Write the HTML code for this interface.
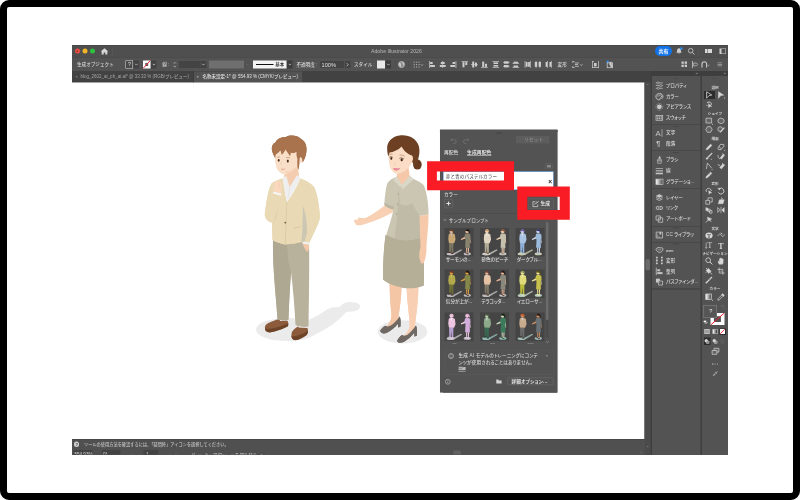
<!DOCTYPE html>
<html lang="ja">
<head>
<meta charset="utf-8">
<title>Adobe Illustrator 2026</title>
<style>
*{box-sizing:border-box;margin:0;padding:0}
html,body{width:800px;height:500px;overflow:hidden;background:#fff}
body{font-family:"Liberation Sans","Noto Sans CJK JP",sans-serif;color:#dcdcdc;position:relative}
.a{position:absolute}
.t{position:absolute;white-space:nowrap;line-height:1;color:#d6d6d6;font-size:4.6px;font-weight:500}
svg{position:absolute;overflow:visible}
#frame{left:0;top:0;width:800px;height:500px;border:7px solid #000;border-radius:9px;background:#fff}
#win{left:72px;top:45px;width:656px;height:410px;background:#535353}
#title{left:72px;top:45px;width:656px;height:12.3px;background:#4f4f4f;border-top:.6px solid #444}
#ctrl{left:72px;top:57.3px;width:656px;height:13.7px;background:#535353;border-top:.6px solid #474747}
#tabs{left:72px;top:71px;width:656px;height:11.5px;background:#424242}
#tab2{left:194px;top:71.4px;width:108px;height:11.1px;background:#535353}
#canvas{left:72px;top:82.5px;width:572.5px;height:356.6px;background:#fff}
#vscroll{left:644.5px;top:82.5px;width:6.1px;height:372.5px;background:#4b4b4b}
#dock1{left:652px;top:76px;width:48.6px;height:379px;background:#535353}
#dock2{left:702px;top:76px;width:26px;height:379px;background:#535353}
#docksep{left:650.6px;top:71px;width:77.4px;height:384px;background:#3e3e3e}
@supports not (zoom:2){#root{transform:none!important}}
#status{left:72px;top:439px;width:572.5px;height:16px;background:#505050}
</style>
</head>
<body>
<div id="root" class="a" style="left:0;top:0;width:800px;height:500px;zoom:2;transform:scale(.5);transform-origin:0 0;filter:contrast(1)">
<div id="frame" class="a"></div>
<div id="win" class="a"></div>
<div id="title" class="a"></div>
<div id="ctrl" class="a"></div>
<div id="tabs" class="a"></div>
<div id="tab2" class="a"></div>
<div id="canvas" class="a"></div>
<div id="vscroll" class="a"></div>
<div id="docksep" class="a"></div>
<div id="dock1" class="a"></div>
<div id="dock2" class="a"></div>
<div id="status" class="a"></div>
<!--TITLEBAR-->
<div class="a" style="left:74.8px;top:48.7px;width:5px;height:5px;border-radius:50%;background:#ee4f47"></div>
<div class="a" style="left:76.6px;top:50.5px;width:1.4px;height:1.4px;border-radius:50%;background:#8c1a14"></div>
<div class="a" style="left:82.3px;top:48.7px;width:5px;height:5px;border-radius:50%;background:#f6b526"></div>
<div class="a" style="left:90px;top:48.7px;width:5px;height:5px;border-radius:50%;background:#2cc13e"></div>
<svg style="left:100.5px;top:48px" width="8" height="7" viewBox="0 0 8 7"><path d="M4 0.2 L7.8 3.6 H6.8 V6.6 H4.8 V4.4 H3.2 V6.6 H1.2 V3.6 H0.2 Z" fill="#d8d8d8"/></svg>
<div class="a" style="left:112.3px;top:47px;width:.5px;height:8.5px;background:#5c5c5c"></div>
<div class="t" style="left:371px;top:48.5px;font-size:5.2px;color:#b8b8b8">Adobe Illustrator 2026</div>
<div class="a" style="left:654.8px;top:46.2px;width:17.2px;height:9.6px;border-radius:5px;background:#1373e6"></div>
<div class="t" style="left:658.4px;top:48.4px;font-size:5px;color:#fff;font-weight:bold">共有</div>
<svg style="left:675.5px;top:47px" width="8" height="8" viewBox="0 0 8 8"><path d="M3.5 1.2 C4.8 1.2 5.4 2.2 5.4 3.4 C5.4 4.6 5.8 5.2 6.4 5.8 H0.6 C1.2 5.2 1.6 4.6 1.6 3.4 C1.6 2.2 2.2 1.2 3.5 1.2 Z M2.8 6.3 H4.2 C4.2 7 2.8 7 2.8 6.3Z" fill="#cfcfcf"/><circle cx="5.9" cy="1.5" r="1.3" fill="#2b8cf0"/></svg>
<svg style="left:687.5px;top:47.4px" width="8" height="8" viewBox="0 0 8 8"><circle cx="3.2" cy="3.2" r="2.3" fill="none" stroke="#cfcfcf" stroke-width=".8"/><path d="M4.9 4.9 L7 7" stroke="#cfcfcf" stroke-width=".9"/></svg>
<div class="a" style="left:698.5px;top:47px;width:.5px;height:8.5px;background:#5c5c5c"></div>
<div class="a" style="left:705.2px;top:49.2px;width:2.3px;height:4px;background:#d8d8d8"></div>
<div class="a" style="left:708.2px;top:49.2px;width:3.8px;height:4px;background:#d8d8d8"></div>
<div class="a" style="left:719.4px;top:48.6px;width:6.6px;height:5.4px;border:.7px solid #d0d0d0;border-left:2px solid #d0d0d0"></div>
<!--CTRLBAR-->
<div class="t" style="left:77px;top:62.1px;font-size:4.6px;color:#d2d2d2;">生成オブジェクト</div>
<div class="a" style="left:125.5px;top:60.5px;width:7.6px;height:8px;background:#4a4a4a;border:.9px solid #dedede"></div>
<div class="t" style="left:127.9px;top:61.9px;font-size:5.2px;color:#e6e6e6;">?</div>
<div class="a" style="left:133.6px;top:60.5px;width:5.6px;height:8px;background:#434343;"></div>
<svg style="left:135.0px;top:63.7px" width="2.8" height="2" viewBox="0 0 2.8 2"><path d="M0.1 0.3 L1.4 1.6 L2.6999999999999997 0.3" fill="none" stroke="#cfcfcf" stroke-width=".7"/></svg>
<div class="a" style="left:143px;top:60.5px;width:7.4px;height:8px;background:#fff;"></div>
<svg style="left:143px;top:60.5px" width="7.4" height="8" viewBox="0 0 7.4 8"><rect x="2.2" y="2.4" width="3" height="3.2" fill="#666"/><path d="M0.3 7.7 L7.1 0.3" stroke="#e8202a" stroke-width="1"/></svg>
<div class="a" style="left:150.9px;top:60.5px;width:5.6px;height:8px;background:#434343;"></div>
<svg style="left:152.29999999999998px;top:63.7px" width="2.8" height="2" viewBox="0 0 2.8 2"><path d="M0.1 0.3 L1.4 1.6 L2.6999999999999997 0.3" fill="none" stroke="#cfcfcf" stroke-width=".7"/></svg>
<div class="t" style="left:162.3px;top:62.2px;font-size:4.6px;color:#d2d2d2;">線</div>
<div class="t" style="left:167.8px;top:62.0px;font-size:4.6px;color:#d2d2d2;">:</div>
<svg style="left:173.29999999999998px;top:61.8px" width="2.6" height="2" viewBox="0 0 2.6 2"><path d="M0.1 1.6 L1.3 0.3 L2.5 1.6" fill="none" stroke="#c8c8c8" stroke-width=".7"/></svg>
<svg style="left:173.3px;top:65.6px" width="2.6" height="2" viewBox="0 0 2.6 2"><path d="M0.1 0.3 L1.3 1.6 L2.5 0.3" fill="none" stroke="#c8c8c8" stroke-width=".7"/></svg>
<div class="a" style="left:179px;top:61px;width:21px;height:7.2px;background:#444;"></div>
<div class="a" style="left:200.6px;top:61px;width:5.8px;height:7.2px;background:#434343;"></div>
<svg style="left:202.1px;top:63.7px" width="2.8" height="2" viewBox="0 0 2.8 2"><path d="M0.1 0.3 L1.4 1.6 L2.6999999999999997 0.3" fill="none" stroke="#cfcfcf" stroke-width=".7"/></svg>
<div class="a" style="left:209px;top:60.5px;width:35px;height:8px;background:#6f6f6f;"></div>
<svg style="left:246.1px;top:63.7px" width="2.8" height="2" viewBox="0 0 2.8 2"><path d="M0.1 0.3 L1.4 1.6 L2.6999999999999997 0.3" fill="none" stroke="#6a6a6a" stroke-width=".7"/></svg>
<div class="a" style="left:253px;top:60.5px;width:33.6px;height:8px;background:#f4f4f4;"></div>
<div class="a" style="left:256px;top:64px;width:17.5px;height:1px;background:#111;"></div>
<div class="t" style="left:275.2px;top:62.2px;font-size:4.5px;color:#111;">基本</div>
<div class="a" style="left:287.1px;top:60.5px;width:5.4px;height:8px;background:#3d3d3d;"></div>
<svg style="left:288.40000000000003px;top:63.7px" width="2.8" height="2" viewBox="0 0 2.8 2"><path d="M0.1 0.3 L1.4 1.6 L2.6999999999999997 0.3" fill="none" stroke="#cfcfcf" stroke-width=".7"/></svg>
<div class="t" style="left:296.4px;top:62.0px;font-size:4.6px;color:#dcdcdc;border-bottom:.5px dotted #bbb;padding-bottom:.6px">不透明度</div>
<div class="t" style="left:315.7px;top:62.0px;font-size:4.6px;color:#d2d2d2;">:</div>
<div class="a" style="left:320px;top:61px;width:24.2px;height:7.2px;background:#444;"></div>
<div class="t" style="left:321.6px;top:61.8px;font-size:5.6px;color:#e0e0e0;">100%</div>
<div class="a" style="left:344.8px;top:61px;width:5.6px;height:7.2px;background:#434343;"></div>
<svg style="left:346.6px;top:62.9px" width="2" height="3.4" viewBox="0 0 2 3.4"><path d="M0.3 0.2 L1.7 1.7 L0.3 3.2" fill="none" stroke="#d8d8d8" stroke-width=".7"/></svg>
<div class="t" style="left:354px;top:62.1px;font-size:4.6px;color:#d2d2d2;">スタイル</div>
<div class="t" style="left:373.2px;top:62.0px;font-size:4.6px;color:#9a9a9a;">:</div>
<div class="a" style="left:376.9px;top:60.6px;width:8.1px;height:8px;background:#e9e9e9;"></div>
<div class="a" style="left:385.6px;top:60.6px;width:5.5px;height:8px;background:#3d3d3d;"></div>
<svg style="left:387.0px;top:63.7px" width="2.8" height="2" viewBox="0 0 2.8 2"><path d="M0.1 0.3 L1.4 1.6 L2.6999999999999997 0.3" fill="none" stroke="#cfcfcf" stroke-width=".7"/></svg>
<div class="a" style="left:395.5px;top:60.5px;width:0.5px;height:8px;background:#484848;"></div>
<svg style="left:398px;top:61px" width="7" height="7" viewBox="0 0 7 7"><circle cx="3.5" cy="3.5" r="3" fill="#8a8a8a" stroke="#d0d0d0" stroke-width=".7"/><path d="M1.2 2.2 C2.4 1.6 3.2 2.6 2.8 3.6 C2.5 4.4 3.4 4.8 3.2 5.8 C2 5.6 .8 4 1.2 2.2Z M4.4 1 C5.6 1.6 6.2 2.8 6 4 C5.2 3.8 4.4 3 4.4 1Z" fill="#d8d8d8"/></svg>
<div class="a" style="left:408.3px;top:60.5px;width:0.5px;height:8px;background:#484848;"></div>
<svg style="left:413.6px;top:61.3px" width="7" height="7" viewBox="0 0 7 7"><rect x="0.2" y="0.2" width="1" height="1" fill="#bdbdbd"/><rect x="0.2" y="2.6" width="1" height="1" fill="#bdbdbd"/><rect x="0.2" y="5.0" width="1" height="1" fill="#bdbdbd"/><rect x="2.6" y="0.2" width="1" height="1" fill="#bdbdbd"/><rect x="2.6" y="2.6" width="1" height="1" fill="#bdbdbd"/><rect x="2.6" y="5.0" width="1" height="1" fill="#bdbdbd"/><rect x="5.0" y="0.2" width="1" height="1" fill="#bdbdbd"/><rect x="5.0" y="2.6" width="1" height="1" fill="#bdbdbd"/><rect x="5.0" y="5.0" width="1" height="1" fill="#bdbdbd"/></svg>
<svg style="left:420.7px;top:64px" width="2.6" height="2" viewBox="0 0 2.6 2"><path d="M0.1 0.3 L1.3 1.6 L2.5 0.3" fill="none" stroke="#bdbdbd" stroke-width=".7"/></svg>
<svg style="left:429px;top:61px" width="7" height="7" viewBox="0 0 7 7"><rect x="0" y="0" width="0.7" height="7" fill="#cccccc"/><rect x="1.1" y="1" width="2.6" height="2" fill="#cccccc"/><rect x="1.1" y="4" width="4.8" height="2" fill="#cccccc"/></svg>
<svg style="left:439.3px;top:61px" width="7" height="7" viewBox="0 0 7 7"><rect x="2.9" y="0" width="0.7" height="7" fill="#cccccc"/><rect x="1.3" y="1" width="3.9" height="2" fill="#cccccc"/><rect x="0.3" y="4" width="5.9" height="2" fill="#cccccc"/></svg>
<svg style="left:450px;top:61px" width="7" height="7" viewBox="0 0 7 7"><rect x="5.6" y="0" width="0.7" height="7" fill="#cccccc"/><rect x="2.5" y="1" width="2.7" height="2" fill="#cccccc"/><rect x="0.3" y="4" width="4.9" height="2" fill="#cccccc"/></svg>
<svg style="left:461.3px;top:61px" width="7" height="7" viewBox="0 0 7 7"><rect x="0" y="0" width="6.6" height="0.7" fill="#cccccc"/><rect x="1" y="1.1" width="2" height="5.2" fill="#cccccc"/><rect x="3.8" y="1.1" width="2" height="3" fill="#cccccc"/></svg>
<svg style="left:471px;top:61px" width="7" height="7" viewBox="0 0 7 7"><rect x="0" y="3.2" width="6.8" height="0.7" fill="#cccccc"/><rect x="1.2" y="0.6" width="2" height="5.9" fill="#cccccc"/><rect x="4" y="1.6" width="2" height="3.9" fill="#cccccc"/></svg>
<svg style="left:481px;top:61px" width="7" height="7" viewBox="0 0 7 7"><rect x="0" y="6.3" width="6.8" height="0.7" fill="#cccccc"/><rect x="1.2" y="0.6" width="2" height="5.3" fill="#cccccc"/><rect x="4" y="2.8" width="2" height="3.1" fill="#cccccc"/></svg>
<svg style="left:492.6px;top:61px" width="7" height="7" viewBox="0 0 7 7"><rect x="0" y="0.2" width="6.6" height="0.7" fill="#cccccc"/><rect x="1" y="1.4" width="4.6" height="1.6" fill="#cccccc"/><rect x="0" y="6.1" width="6.6" height="0.7" fill="#cccccc"/><rect x="1" y="4" width="4.6" height="1.6" fill="#cccccc"/></svg>
<svg style="left:503px;top:61px" width="7" height="7" viewBox="0 0 7 7"><rect x="0" y="1.2" width="6.6" height="0.7" fill="#cccccc"/><rect x="1" y="0.3" width="4.6" height="2.4" fill="#cccccc"/><rect x="0" y="4.9" width="6.6" height="0.7" fill="#cccccc"/><rect x="1" y="4" width="4.6" height="2.4" fill="#cccccc"/></svg>
<svg style="left:512.6px;top:61px" width="7" height="7" viewBox="0 0 7 7"><rect x="0" y="2.3" width="6.6" height="0.7" fill="#cccccc"/><rect x="1" y="0.7" width="4.6" height="1.6" fill="#cccccc"/><rect x="0" y="6.1" width="6.6" height="0.7" fill="#cccccc"/><rect x="1" y="4.5" width="4.6" height="1.6" fill="#cccccc"/></svg>
<svg style="left:524.4px;top:61px" width="7" height="7" viewBox="0 0 7 7"><rect x="0.2" y="0" width="0.7" height="6.8" fill="#cccccc"/><rect x="1.3" y="1" width="1.8" height="4.8" fill="#cccccc"/><rect x="5.6" y="0" width="0.7" height="6.8" fill="#cccccc"/><rect x="3.6" y="1" width="1.8" height="4.8" fill="#cccccc"/></svg>
<svg style="left:534.4px;top:61px" width="7" height="7" viewBox="0 0 7 7"><rect x="1.2" y="0" width="0.7" height="6.8" fill="#cccccc"/><rect x="0.3" y="1" width="2.4" height="4.8" fill="#cccccc"/><rect x="5" y="0" width="0.7" height="6.8" fill="#cccccc"/><rect x="4.1" y="1" width="2.4" height="4.8" fill="#cccccc"/></svg>
<svg style="left:544.8px;top:61px" width="7" height="7" viewBox="0 0 7 7"><rect x="2.3" y="0" width="0.7" height="6.8" fill="#cccccc"/><rect x="0.6" y="1" width="1.7" height="4.8" fill="#cccccc"/><rect x="6.1" y="0" width="0.7" height="6.8" fill="#cccccc"/><rect x="4.4" y="1" width="1.7" height="4.8" fill="#cccccc"/></svg>
<div class="t" style="left:557.6px;top:62.1px;font-size:4.6px;color:#d2d2d2;">変形</div>
<svg style="left:572.5px;top:61px" width="7" height="7" viewBox="0 0 7 7"><rect x="0" y="0" width="0.7" height="2" fill="#cccccc"/><rect x="0" y="0" width="2" height="0.7" fill="#cccccc"/><rect x="0" y="5" width="0.7" height="2" fill="#cccccc"/><rect x="0" y="6.3" width="2" height="0.7" fill="#cccccc"/><rect x="2.4" y="1.6" width="4" height="0.8" fill="#cccccc"/><rect x="2.4" y="3.2" width="3" height="0.8" fill="#cccccc"/><rect x="2.4" y="4.8" width="4" height="0.8" fill="#cccccc"/></svg>
<svg style="left:580.2px;top:64px" width="2.6" height="2" viewBox="0 0 2.6 2"><path d="M0.1 0.3 L1.3 1.6 L2.5 0.3" fill="none" stroke="#cfcfcf" stroke-width=".7"/></svg>
<svg style="left:592.2px;top:61px" width="7" height="7" viewBox="0 0 7 7"><rect x="0" y="0" width="0.7" height="7" fill="#cccccc"/><rect x="6" y="0" width="0.7" height="7" fill="#cccccc"/><rect x="0" y="6.3" width="6.7" height="0.7" fill="#cccccc"/><rect x="2" y="2" width="2.6" height="3.4" fill="#cccccc"/><rect x="0" y="0" width="2" height="0.7" fill="#cccccc"/></svg>
<svg style="left:605.8px;top:60.4px" width="8" height="8" viewBox="0 0 8 8"><circle cx="1.6" cy="1.2" r="1.2" fill="#2b8cf0"/><rect x="1" y="2.6" width="5.6" height="4.6" fill="none"/><rect x="1.2" y="2.4" width="5.4" height="4.8" fill="none" stroke="#cccccc" stroke-width=".8"/><rect x="3.4" y="1.4" width="2.2" height="3.4" fill="#cccccc"/><rect x="4.4" y="4" width="2" height="2.6" fill="#cccccc"/></svg>
<svg style="left:681.6px;top:61.6px" width="6" height="6" viewBox="0 0 6 6"><rect x="0" y="0" width="2.3" height="2.3" fill="#cccccc"/><rect x="3.2" y="0" width="2.3" height="2.3" fill="#cccccc"/><rect x="0" y="3.2" width="2.3" height="2.3" fill="#cccccc"/><rect x="3.2" y="3.2" width="2.3" height="2.3" fill="#cccccc"/></svg>
<svg style="left:691.5px;top:61px" width="7" height="7" viewBox="0 0 7 7"><rect x="0.6" y="0" width="0.8" height="7" fill="#cccccc"/><path d="M2.2 2 H5 L6.2 3.4 L5 4.8 H2.2Z" fill="none" stroke="#cccccc" stroke-width=".7"/></svg>
<svg style="left:700.8px;top:61.2px" width="8" height="7" viewBox="0 0 8 7"><path d="M1 6.4 V3 A2.3 2.3 0 0 1 5.6 3 V6.4" fill="none" stroke="#cccccc" stroke-width="1.1"/></svg>
<svg style="left:707.4px;top:64.4px" width="1.8" height="2" viewBox="0 0 1.8 2"><path d="M0.1 0.3 L0.9 1.6 L1.7 0.3" fill="none" stroke="#a8a8a8" stroke-width=".7"/></svg>
<svg style="left:717.5px;top:62.4px" width="5" height="5" viewBox="0 0 5 5"><rect x="0" y="0" width="4.6" height="0.7" fill="#a8a8a8"/><rect x="0" y="1.5" width="4.6" height="0.7" fill="#a8a8a8"/><rect x="0" y="3" width="4.6" height="0.7" fill="#a8a8a8"/></svg>
<!--TABS-->
<div class="t" style="left:75.4px;top:74.9px;font-size:4px;color:#a0a0a0">×</div>
<div class="t" style="left:80.6px;top:74.6px;font-size:4.5px;color:#a6a6a6">blog_2602_ai_ph_ai.ai* @ 33.33 % (RGB/プレビュー)</div>
<div class="a" style="left:193.6px;top:71px;width:.5px;height:11.5px;background:#383838"></div>
<div class="t" style="left:196.6px;top:74.9px;font-size:4px;color:#e0e0e0">×</div>
<div class="t" style="left:202.6px;top:74.6px;font-size:4.5px;color:#e4e4e4">名称未設定-1* @ 554.93 % (CMYK/プレビュー)</div>
<!--ART-->
<svg style="left:0;top:0" width="800" height="500" viewBox="0 0 800 500">
<!-- shadows -->
<g fill="#ebebeb">
<ellipse cx="287" cy="329.5" rx="31" ry="11.5"/>
<path d="M300 323 C306 321.6 316 316.6 322.5 312.4 C326 310 329 308 332.5 307.4 C336 306.8 338.6 307.6 340.4 306.6 C342 303.4 346 301.6 350.4 302 C355.6 302.2 360.4 303.6 360 306.4 C359.6 309.4 355.6 311.4 351 311.6 C348.6 311.8 346.6 312 345 313 C343 315.6 340.6 318 337.5 320.4 C334 323.4 331 325.6 327.5 327.8 C323 330.6 318 333.4 312 335.6Z"/>
<ellipse cx="402.5" cy="331.8" rx="24.8" ry="11.6"/>
</g>
<!-- MAN -->
<g>
<!-- far shoe (left on screen) -->
<path d="M265 326.5 C266 323 272 321.5 277 319.5 L286 319 C288.5 321 288.8 324 288 326 C283 328.5 276 331.5 270 332.2 C266.5 332.5 264.5 330 265 326.5Z" fill="#8b5b3b"/>
<path d="M265 328.6 C270 330 282 326 288.3 323.5 L288 326.2 C283 328.7 276 331.7 270 332.4 C266.5 332.6 264.8 330.8 265 328.6Z" fill="#6e4429"/>
<!-- near shoe -->
<path d="M291.5 334 C292 330 296 328 298.5 326 L307 327 C308.5 329.5 308.3 333 306.5 335 C303 337.5 299 339.8 295.5 340 C292.5 340 291 337.5 291.5 334Z" fill="#8b5b3b"/>
<path d="M291.5 336 C295 337.5 303 334 308 330.5 C308 332.5 307.5 334 306.5 335.2 C303 337.7 299 340 295.5 340.2 C293 340.2 291.5 338.4 291.5 336Z" fill="#6e4429"/>
<!-- socks -->
<path d="M279 317 L288 317 L288 320.5 L280 321Z" fill="#efefef"/>
<path d="M298 324 L307.5 324 L307.5 328 L298.5 327.5Z" fill="#efefef"/>
<!-- pants -->
<path d="M273 240 L309 240 C309.5 262 309 296 308.5 326.5 C304 327.5 299 326.5 295.5 325 C294.5 306 293 288 291 272 C290 286 289 304 288.5 319.5 C285 320.8 280 320.3 277.5 319 C276 296 272.5 268 273 240Z" fill="#b8b19b"/>
<path d="M273 240 L287 240 C287.5 262 290 270 291 272 C290 286 289 304 288.5 319.5 C285 320.8 280 320.3 277.5 319 C276 296 272.5 268 273 240Z" fill="#aea791"/>
<!-- hand in pocket -->
<path d="M302.5 243 L308.8 244 C309.5 247 309 250.5 307 252 C305.5 250 303.5 247 302.5 243Z" fill="#f3c8aa"/>
<path d="M302.3 241.3 L309.3 242.3 L309 244.6 L302.3 243.4Z" fill="#f2f2f2"/>
<!-- neck -->
<path d="M285 170 L298 166 L299.5 180 L289.5 189.5 L283.4 180Z" fill="#f4cdb0"/>
<!-- shirt -->
<path d="M282.5 178.5 L286.2 176.2 L289.6 187.6 L297.2 175.2 L300.5 178.5 L287 203 Z" fill="#efefef"/><path d="M289.6 187.6 L288 198" stroke="#dcdcdc" stroke-width=".5"/>
<!-- jacket body -->
<path d="M282.5 178.5 C278 180 274 181 271.5 183.5 C268 190 266 204 264.8 214 C264.5 217.5 267 221.5 272 222.5 L272.5 240 C276 242.3 281 243.8 285 244.6 C291 244.2 298 243 303.5 241.3 L309.5 242.6 C313 234 318 226 320 218 C319.5 206 317 194 314.5 187.5 C311 183 305 180.5 300.5 178.5 C297 187 292 196 286.8 202.5 C285 195 283.5 186 282.5 178.5Z" fill="#e9dab5"/>
<!-- side panel shade -->
<path d="M303 206 C305.5 212 307 222 307.2 232 L304.5 241.2 L301.5 241.8 C302.5 230 302.8 216 303 206Z" fill="#cbc7b2"/>
<!-- front seam / lapel shade -->
<path d="M286.8 202.5 L285.2 244.6" stroke="#d6c69e" stroke-width=".7" fill="none"/>
<path d="M276.5 196 C275.5 204 275 214 272 222.5 C275 221 277.5 216 278 208Z" fill="#d9c9a3"/>
<circle cx="285.3" cy="222.6" r=".9" fill="#6b5a44"/>
<path d="M293.5 228.2 L300.5 226.6" stroke="#d2c29b" stroke-width=".7"/>
<!-- forearm raised -->
<path d="M265 213 C266.6 205 270 197 273.2 192.6 L281 195 C280 202 277.4 213 273 222.5 C268.5 222.6 264.6 218 265 213Z" fill="#e9dab5"/>
<path d="M273.6 191.2 L281.4 193.4 L281 195.8 L273 193.4Z" fill="#f6f6f6"/>
<!-- fist -->
<path d="M273.8 191.6 C273.2 187.6 273.8 183.6 275.6 181.6 C277.6 179.8 280.2 180.6 281.2 183 C282 185.6 281.8 189.6 281.2 193.6Z" fill="#f9d8be"/><path d="M278.6 181.6 C279.6 184 279.4 187 278.4 189" stroke="#efc2a2" stroke-width=".5" fill="none"/>
<!-- head -->
<path d="M276 150 C274.5 157 275.3 165 277.5 169.5 C279.5 173 283 174.8 286.5 174.2 C292 172.8 297 168 299 163 C302 163 303.5 159.5 302.3 157 C301.4 155.2 299.8 155.2 299 156.4 L298 148 L282 145Z" fill="#fadfc8"/>
<path d="M285 170.5 C288.5 172.4 294 170 298 165.5 L298.8 169.5 C295 172.8 290 175 286.5 174.2Z" fill="#f4cdb0" opacity=".6"/>
<!-- hair -->
<path d="M272 150.4 C271.4 146.6 273 143.4 275.4 142.6 C276.6 138.8 282 136.4 286 137 C290 134.6 297.4 135.2 300.8 138.8 C305.2 140.8 307.2 146.6 306.4 151.6 C306.2 155.6 304.6 159.4 302.6 162.6 C302.8 160 302 157.4 300.4 157 C299.6 158 299.4 159.4 299.6 160.4 C299 163.4 299.4 166.4 298.4 169.6 C297.2 167 297.2 162.6 297.4 159 C296.6 156.6 296.2 154 296.6 151.8 C294.6 153.4 292 153.4 290.6 152.4 C291 153.8 290.6 155 289.8 156 C288.6 153.6 286.8 151.4 285.4 149.4 C284.6 151.8 283 153.8 281.4 154.8 C281.4 153 281 151.4 280.2 150.4 C279 152.2 277.4 153.6 275.8 154.2 C275.4 155.6 275.2 157 275.2 158 C274 155.6 272.6 153.4 272 150.4Z" fill="#a8734d"/>
<!-- eyes -->
<ellipse cx="278.7" cy="160.3" rx=".9" ry="1.4" fill="#4a2c1c"/>
<ellipse cx="287.8" cy="160.9" rx="1" ry="1.5" fill="#4a2c1c"/>
<path d="M277 157.3 L280 156.9 M286 157.4 L290 157.7" stroke="#a8734d" stroke-width=".5"/>
<path d="M281 168.9 C282.3 169.7 284 169.6 285.2 168.6" stroke="#d98a7a" stroke-width=".7" fill="none"/>
<path d="M281.4 162 C280.8 163.5 280.6 164.6 281.4 165.2" stroke="#ecbfa0" stroke-width=".5" fill="none"/>
</g>
<!-- WOMAN -->
<g>
<!-- far leg/shoe -->
<path d="M389.6 283 L401.5 283 C401.6 296 400 306 398.8 315 C398.6 318 398.4 320 398 322 C394 326 388 329.6 384.6 329 C388 325.6 391.4 321 391.4 315 C390.6 305 389.6 294 389.6 283Z" fill="#f5c6a6"/>
<path d="M380.2 330.6 C382.6 327.4 384.4 326 385.6 325.8 C387 327.6 391 326 394.6 322.6 C397 320.2 398.6 318 399.8 316.6 C400.8 319.4 400.8 323 400.4 326.8 L398.2 327.4 L398 323.8 C395 327.4 390.6 331.4 386.4 333 C383.4 334 380.4 333.2 380.2 330.6Z" fill="#6f6863"/>
<!-- near leg/shoe -->
<path d="M406.6 286 L418.4 286 C418.4 300 416.4 314 414.8 326 C414.6 328 414.4 330 414 332 C410 336 405 339.6 401.4 338.6 C405 335 409.6 331 409.8 325 C409 313 406.8 300 406.6 286Z" fill="#f8cfb2"/>
<path d="M397.2 340.4 C399.4 337 401 335.4 402.4 335 C404 337 407.6 335.4 411 331.6 C413.2 329 414.8 327 416 325.4 C417.2 328.4 417.2 332 416.8 335.8 L414.4 336.4 L414.4 332.6 C411.4 336.4 407 340.6 403 342.2 C400 343.2 397.2 342.6 397.2 340.4Z" fill="#6f6863"/>
<!-- skirt -->
<path d="M385.6 235 L422.8 237 C423.6 250 424.2 268 423.8 285.4 C418 288.2 410 288.6 404.5 288 C397 287.2 388 284 383 279.6 C382.8 265 383.8 248 385.6 235Z" fill="#b6af98"/>
<!-- far arm (back, reaching left) -->
<path d="M388.5 202.5 L394 211.5 C386 216.5 376 220.8 367.5 223.2 C364 224.6 360 225.6 357 225.2 C355.4 224.8 355 223.6 356.4 223 C354 222.6 353.2 221 354.6 220.4 L358.2 220 C357.2 218.8 357.8 217.6 359.2 217.8 C362 218.4 364.8 218.2 367 217.4 C374.6 213.6 382 208 388.5 202.5Z" fill="#f8d0b4"/>
<!-- shirt -->
<path d="M282.5 178.5 L286.2 176.2 L289.6 187.6 L297.2 175.2 L300.5 178.5 L287 203 Z" fill="#efefef"/><path d="M289.6 187.6 L288 198" stroke="#dcdcdc" stroke-width=".5"/>
<!-- jacket body -->
<path d="M282.5 178.5 C278 180 274 181 271.5 183.5 C268 190 266 204 264.8 214 C264.5 217.5 267 221.5 272 222.5 L272.5 240 C276 242.3 281 243.8 285 244.6 C291 244.2 298 243 303.5 241.3 L309.5 242.6 C313 234 318 226 320 218 C319.5 206 317 194 314.5 187.5 C311 183 305 180.5 300.5 178.5 C297 187 292 196 286.8 202.5 C285 195 283.5 186 282.5 178.5Z" fill="#e9dab5"/>
<!-- side panel shade -->
<path d="M303 206 C305.5 212 307 222 307.2 232 L304.5 241.2 L301.5 241.8 C302.5 230 302.8 216 303 206Z" fill="#cbc7b2"/>
<!-- front seam / lapel shade -->
<path d="M286.8 202.5 L285.2 244.6" stroke="#d6c69e" stroke-width=".7" fill="none"/>
<path d="M276.5 196 C275.5 204 275 214 272 222.5 C275 221 277.5 216 278 208Z" fill="#d9c9a3"/>
<circle cx="285.3" cy="222.6" r=".9" fill="#6b5a44"/>
<path d="M293.5 228.2 L300.5 226.6" stroke="#d2c29b" stroke-width=".7"/>
<!-- forearm raised -->
<path d="M265 213 C266.6 205 270 197 273.2 192.6 L281 195 C280 202 277.4 213 273 222.5 C268.5 222.6 264.6 218 265 213Z" fill="#e9dab5"/>
<path d="M273.6 191.2 L281.4 193.4 L281 195.8 L273 193.4Z" fill="#f6f6f6"/>
<!-- fist -->
<path d="M273.8 191.6 C273.2 187.6 273.8 183.6 275.6 181.6 C277.6 179.8 280.2 180.6 281.2 183 C282 185.6 281.8 189.6 281.2 193.6Z" fill="#f9d8be"/><path d="M278.6 181.6 C279.6 184 279.4 187 278.4 189" stroke="#efc2a2" stroke-width=".5" fill="none"/>
<!-- head -->
<path d="M276 150 C274.5 157 275.3 165 277.5 169.5 C279.5 173 283 174.8 286.5 174.2 C292 172.8 297 168 299 163 C302 163 303.5 159.5 302.3 157 C301.4 155.2 299.8 155.2 299 156.4 L298 148 L282 145Z" fill="#fadfc8"/>
<path d="M285 170.5 C288.5 172.4 294 170 298 165.5 L298.8 169.5 C295 172.8 290 175 286.5 174.2Z" fill="#f4cdb0" opacity=".6"/>
<!-- hair -->
<path d="M272 150.4 C271.4 146.6 273 143.4 275.4 142.6 C276.6 138.8 282 136.4 286 137 C290 134.6 297.4 135.2 300.8 138.8 C305.2 140.8 307.2 146.6 306.4 151.6 C306.2 155.6 304.6 159.4 302.6 162.6 C302.8 160 302 157.4 300.4 157 C299.6 158 299.4 159.4 299.6 160.4 C299 163.4 299.4 166.4 298.4 169.6 C297.2 167 297.2 162.6 297.4 159 C296.6 156.6 296.2 154 296.6 151.8 C294.6 153.4 292 153.4 290.6 152.4 C291 153.8 290.6 155 289.8 156 C288.6 153.6 286.8 151.4 285.4 149.4 C284.6 151.8 283 153.8 281.4 154.8 C281.4 153 281 151.4 280.2 150.4 C279 152.2 277.4 153.6 275.8 154.2 C275.4 155.6 275.2 157 275.2 158 C274 155.6 272.6 153.4 272 150.4Z" fill="#a8734d"/>
<!-- eyes -->
<ellipse cx="278.7" cy="160.3" rx=".9" ry="1.4" fill="#4a2c1c"/>
<ellipse cx="287.8" cy="160.9" rx="1" ry="1.5" fill="#4a2c1c"/>
<path d="M277 157.3 L280 156.9 M286 157.4 L290 157.7" stroke="#a8734d" stroke-width=".5"/>
<path d="M281 168.9 C282.3 169.7 284 169.6 285.2 168.6" stroke="#d98a7a" stroke-width=".7" fill="none"/>
<path d="M281.4 162 C280.8 163.5 280.6 164.6 281.4 165.2" stroke="#ecbfa0" stroke-width=".5" fill="none"/>
</g>
<!-- WOMAN -->
<g>
<!-- far leg/shoe -->
<path d="M389.6 283 L401.5 283 C401.6 296 400 306 398.8 315 C398.6 318 398.4 320 398 322 C394 326 388 329.6 384.6 329 C388 325.6 391.4 321 391.4 315 C390.6 305 389.6 294 389.6 283Z" fill="#f5c6a6"/>
<path d="M380.2 330.6 C382.6 327.4 384.4 326 385.6 325.8 C387 327.6 391 326 394.6 322.6 C397 320.2 398.6 318 399.8 316.6 C400.8 319.4 400.8 323 400.4 326.8 L398.2 327.4 L398 323.8 C395 327.4 390.6 331.4 386.4 333 C383.4 334 380.4 333.2 380.2 330.6Z" fill="#6f6863"/>
<!-- near leg/shoe -->
<path d="M406.6 286 L418.4 286 C418.4 300 416.4 314 414.8 326 C414.6 328 414.4 330 414 332 C410 336 405 339.6 401.4 338.6 C405 335 409.6 331 409.8 325 C409 313 406.8 300 406.6 286Z" fill="#f8cfb2"/>
<path d="M397.2 340.4 C399.4 337 401 335.4 402.4 335 C404 337 407.6 335.4 411 331.6 C413.2 329 414.8 327 416 325.4 C417.2 328.4 417.2 332 416.8 335.8 L414.4 336.4 L414.4 332.6 C411.4 336.4 407 340.6 403 342.2 C400 343.2 397.2 342.6 397.2 340.4Z" fill="#6f6863"/>
<!-- skirt -->
<path d="M385.6 235 L422.8 237 C423.6 250 424.2 268 423.8 285.4 C418 288.2 410 288.6 404.5 288 C397 287.2 388 284 383 279.6 C382.8 265 383.8 248 385.6 235Z" fill="#b6af98"/>
<!-- far arm (back, reaching left) -->
<path d="M388.5 203 L393.5 211 C386 215.5 376 219.5 366.5 221.8 C363 223.4 359 224.6 356.5 224.2 C355 223.8 354.6 222.6 356 222 C354 221.6 353.6 220.2 355 219.8 L358.5 219.6 C357.5 218.6 358 217.6 359.4 217.8 C362 218.4 364.5 218.6 366.5 217.8 C374 214 382 208 388.5 203Z" fill="#f8d0b4"/>
<!-- shirt -->
<path d="M396.5 177 C392 178.5 388.5 180.5 387 184 C385.5 190 384.5 198 384.4 205 C387 207.6 390.5 209 393.5 209.4 C392 217 389 226 386.3 235 C392 238 399 240 405.5 240.2 C411 240.4 417.5 239 422 237 C421.8 229 421 220 419.6 215.6 C422.6 216.2 426 215.4 428.6 213.8 C428.4 203 426.6 191 423.6 185 C420 181.5 414 179 409.5 177.6 L402 186Z" fill="#cac6b2"/>
<path d="M399 186 C398.6 200 397 222 394.6 238.4 C398 239.6 402 240.2 405.5 240.2 C411 240.4 417.5 239 422 237 C421.8 229 421 220 419.6 215.6 C417 212 414 208 412.6 203 C409 206 403 206 399.6 204Z" fill="#bfbba6"/>
<path d="M384.4 205 C387 207.6 390.5 209 393.5 209.4 L394 206.6 C391 206 387.5 204.6 384.6 202.4Z" fill="#b9b5a0"/>
<!-- near arm -->
<path d="M419.6 215.6 C422.6 216.2 426 215.4 428.6 213.8 C428.4 224 427.4 236 426.4 246 C426.8 251 426.2 257 424 262.6 C422.6 264.4 420.6 263.6 420.4 261 C419 259 418.6 253 420.6 247.4 C420 236 419.8 224 419.6 215.6Z" fill="#f6c9aa"/>
<!-- neck -->
<path d="M397 170 L408.5 167 L410 179 L402.5 186.5 L396.8 178Z" fill="#f4c8a8"/>
<!-- collar -->
<path d="M396.4 176 L393.6 180.2 L400.6 187.2 L402 185Z M410 175.6 L413.6 179.6 L402.4 189.6 L401.4 185.4Z" fill="#d9d7c8"/>
<circle cx="398.3" cy="194" r=".6" fill="#8d8976"/><circle cx="397.4" cy="204" r=".6" fill="#8d8976"/><circle cx="396.4" cy="214" r=".6" fill="#8d8976"/>
<!-- head -->
<path d="M389.4 149 C388 156 388.6 163.6 390.6 168.4 C392.6 172.4 396 174.4 399.4 173.6 C405 172 410 167.4 412 162 L413 150 L398 144Z" fill="#fbdcc4"/>
<path d="M412 155.6 C414 154.6 415.6 156.6 415 159.4 C414.6 161.6 413 163 411.6 162.6Z" fill="#f8d0b4"/>
<!-- bun -->
<ellipse cx="417.4" cy="164.6" rx="4.3" ry="5" fill="#67391f"/>
<!-- hair -->
<path d="M387.2 149.4 C386.6 142 392 136.4 399.4 135.4 C408 134.2 416.4 138 418.8 146 C420.4 152 419 160 414.6 166.6 C413.6 165 413 163 412.2 161.6 C413.4 159.6 413.4 157 412 155.6 C408 154.6 403.6 151 401.6 146.6 C399 149.6 393 152.4 389.6 152.6 C389 154 388.6 155.4 388.6 156.8 C387.8 154.6 387.2 152 387.2 149.4Z" fill="#6d3f23"/>
<!-- eyes -->
<ellipse cx="391.3" cy="158.5" rx=".95" ry="1.35" fill="#3a2116"/>
<ellipse cx="401.7" cy="159.9" rx="1.1" ry="1.4" fill="#3a2116"/>
<path d="M389.4 157.2 C390.4 156.6 391.8 156.6 392.8 157.4 M399.4 158.4 C400.8 157.6 402.8 157.8 404 159.2" stroke="#3a2116" stroke-width=".6" fill="none"/>
<path d="M389.2 154.4 L392.6 154 M399.6 155 C401.4 154.8 403.4 155.4 404.8 156.4" stroke="#8a5a3a" stroke-width=".45" fill="none"/>
<path d="M393.2 168 C394 171.2 398.4 171.2 400.2 167.8 C398 168.6 395.4 168.7 393.2 168Z" fill="#e0607c"/>
<path d="M393.8 168.4 C395.6 169.2 398 169 399.6 168.2 C398.8 169.4 395.2 169.8 393.8 168.4Z" fill="#fff"/>
<path d="M395 162 C394.4 163.6 394.2 164.8 395.2 165.4" stroke="#eebfa0" stroke-width=".5" fill="none"/>
</g>
</svg>
<!--DOCK-->
<div class="t" style="left:695.6px;top:71.6px;font-size:4.4px;color:#9a9a9a;">»</div>
<div class="t" style="left:723.4px;top:71.6px;font-size:4.4px;color:#9a9a9a;">»</div>
<div class="a" style="left:673px;top:77.9px;width:6px;height:0.8px;background:#464646;"></div>
<div class="a" style="left:712px;top:77.9px;width:6px;height:0.8px;background:#464646;"></div>
<div class="a" style="left:652px;top:124.4px;width:48.6px;height:0.7px;background:#3e3e3e;"></div>
<div class="a" style="left:673px;top:126.10000000000001px;width:6px;height:0.8px;background:#464646;"></div>
<div class="a" style="left:652px;top:150.5px;width:48.6px;height:0.7px;background:#3e3e3e;"></div>
<div class="a" style="left:673px;top:152.2px;width:6px;height:0.8px;background:#464646;"></div>
<div class="a" style="left:652px;top:188px;width:48.6px;height:0.7px;background:#3e3e3e;"></div>
<div class="a" style="left:673px;top:189.7px;width:6px;height:0.8px;background:#464646;"></div>
<div class="a" style="left:652px;top:226px;width:48.6px;height:0.7px;background:#3e3e3e;"></div>
<div class="a" style="left:673px;top:227.7px;width:6px;height:0.8px;background:#464646;"></div>
<div class="a" style="left:652px;top:241.8px;width:48.6px;height:0.7px;background:#3e3e3e;"></div>
<div class="a" style="left:673px;top:243.5px;width:6px;height:0.8px;background:#464646;"></div>
<div class="a" style="left:652px;top:288.6px;width:48.6px;height:0.7px;background:#3e3e3e;"></div>
<svg style="left:655.45px;top:81.35px" width="7.7" height="7.7" viewBox="0 0 7 7"><rect x="0.3" y="1" width="6.4" height="0.6" fill="#c6c6c6"/><rect x="0.3" y="3.4" width="6.4" height="0.6" fill="#c6c6c6"/><rect x="0.3" y="5.8" width="6.4" height="0.6" fill="#c6c6c6"/><circle cx="2.2" cy="1.3" r="1" fill="#535353" stroke="#c6c6c6" stroke-width=".5"/><circle cx="4.8" cy="3.7" r="1" fill="#535353" stroke="#c6c6c6" stroke-width=".5"/><circle cx="2.6" cy="6.1" r="1" fill="#535353" stroke="#c6c6c6" stroke-width=".5"/></svg>
<div class="t" style="left:666.1px;top:82.8px;font-size:4.6px;color:#d8d8d8;font-feature-settings:'palt'">プロパティ</div>
<svg style="left:655.45px;top:92.55px" width="7.7" height="7.7" viewBox="0 0 7 7"><path d="M3.6 1 C5.6 1 6.8 2.2 6.8 3.8 C6.8 5.2 5.6 5.4 4.8 5 C4.2 4.8 3.8 5.2 4 5.8 C4.2 6.4 3.6 6.6 3 6.6 C1.4 6.4 .4 5.2 .4 3.8 C.4 2.2 1.6 1 3.6 1Z" fill="none" stroke="#c6c6c6" stroke-width="0.9"/><circle cx="2.3" cy="3.2" r=".6" fill="#c6c6c6"/><circle cx="4" cy="2.4" r=".6" fill="#c6c6c6"/><circle cx="5.4" cy="3.4" r=".6" fill="#c6c6c6"/></svg>
<div class="t" style="left:666.1px;top:94.0px;font-size:4.6px;color:#d8d8d8;font-feature-settings:'palt'">カラー</div>
<svg style="left:655.45px;top:103.15px" width="7.7" height="7.7" viewBox="0 0 7 7"><circle cx="3.5" cy="3.5" r="2.2" fill="#c8c8c8"/><circle cx="3.5" cy="3.5" r="3.1" fill="none" stroke="#bdbdbd" stroke-width=".6" stroke-dasharray=".7 .7"/></svg>
<div class="t" style="left:666.1px;top:104.6px;font-size:4.6px;color:#d8d8d8;font-feature-settings:'palt'">アピアランス</div>
<svg style="left:655.45px;top:114.15px" width="7.7" height="7.7" viewBox="0 0 7 7"><rect x="0.2" y="1" width="6.6" height="5" fill="none"/><rect x=".5" y="1.3" width="6" height="4.4" fill="none" stroke="#c6c6c6" stroke-width=".7"/><rect x="1.4" y="2.2" width="1.2" height="1" fill="#c6c6c6"/><rect x="3" y="2.2" width="1.2" height="1" fill="#c6c6c6"/><rect x="4.6" y="2.2" width="1.2" height="1" fill="#c6c6c6"/><rect x="1.4" y="3.8" width="1.2" height="1" fill="#c6c6c6"/><rect x="3" y="3.8" width="1.2" height="1" fill="#c6c6c6"/><rect x="4.6" y="3.8" width="1.2" height="1" fill="#c6c6c6"/></svg>
<div class="t" style="left:666.1px;top:115.6px;font-size:4.6px;color:#d8d8d8;font-feature-settings:'palt'">スウォッチ</div>
<svg style="left:655.45px;top:129.15px" width="7.7" height="7.7" viewBox="0 0 7 7"><text x="0" y="6" font-size="7" fill="#c6c6c6" font-family="Liberation Sans, sans-serif">A</text><rect x="5.6" y="0.2" width="0.6" height="6.8" fill="#c6c6c6"/></svg>
<div class="t" style="left:666.1px;top:130.6px;font-size:4.6px;color:#d8d8d8;font-feature-settings:'palt'">文字</div>
<svg style="left:655.45px;top:140.15px" width="7.7" height="7.7" viewBox="0 0 7 7"><text x=".6" y="5.8" font-size="6.4" fill="#c6c6c6" font-weight="bold" font-family="Liberation Sans, sans-serif">¶</text></svg>
<div class="t" style="left:666.1px;top:141.6px;font-size:4.6px;color:#d8d8d8;font-feature-settings:'palt'">段落</div>
<svg style="left:655.45px;top:156.15px" width="7.7" height="7.7" viewBox="0 0 7 7"><path d="M3.4 .4 L4.2 .4 L4.6 2.6 L2.8 2.6Z" fill="#c6c6c6" stroke="#c6c6c6" stroke-width="0.3"/><path d="M1.6 3.4 H5.6 V4.4 H1.6Z" fill="none" stroke="#c6c6c6" stroke-width="0.6"/><path d="M2 4.6 V6.6 H5.2 V4.6" fill="none" stroke="#c6c6c6" stroke-width="0.6"/></svg>
<div class="t" style="left:666.1px;top:157.6px;font-size:4.6px;color:#d8d8d8;font-feature-settings:'palt'">ブラシ</div>
<svg style="left:655.45px;top:166.95px" width="7.7" height="7.7" viewBox="0 0 7 7"><rect x="0.2" y="1" width="6.6" height="0.6" fill="#c6c6c6"/><rect x="0.2" y="3" width="6.6" height="1" fill="#c6c6c6"/><rect x="0.2" y="5.2" width="6.6" height="1.4" fill="#c6c6c6"/></svg>
<div class="t" style="left:666.1px;top:168.4px;font-size:4.6px;color:#d8d8d8;font-feature-settings:'palt'">線</div>
<svg style="left:655.45px;top:177.85px" width="7.7" height="7.7" viewBox="0 0 7 7"><defs><linearGradient id="gd" x1="0" x2="1"><stop offset="0" stop-color="#fff"/><stop offset="1" stop-color="#444"/></linearGradient></defs><rect x=".4" y="1" width="6.4" height="5" fill="url(#gd)" stroke="#c6c6c6" stroke-width=".6"/></svg>
<div class="t" style="left:666.1px;top:179.29999999999998px;font-size:4.6px;color:#d8d8d8;font-feature-settings:'palt'">グラデーショ...</div>
<svg style="left:655.45px;top:193.55px" width="7.7" height="7.7" viewBox="0 0 7 7"><path d="M3.5 .6 L6.6 2.2 L3.5 3.8 L.4 2.2Z" fill="#c6c6c6" stroke="#c6c6c6" stroke-width="0.2"/><path d="M.6 3.6 L3.5 5 L6.4 3.6 M.6 5 L3.5 6.4 L6.4 5" fill="none" stroke="#c6c6c6" stroke-width="0.7"/></svg>
<div class="t" style="left:666.1px;top:195.0px;font-size:4.6px;color:#d8d8d8;font-feature-settings:'palt'">レイヤー</div>
<svg style="left:655.45px;top:204.15px" width="7.7" height="7.7" viewBox="0 0 7 7"><path d="M3 2.2 H2 A1.4 1.4 0 0 0 2 5 H3 M4 2.2 H5 A1.4 1.4 0 0 1 5 5 H4" fill="none" stroke="#c6c6c6" stroke-width="0.8"/><circle cx="3.5" cy="3.6" r="1" fill="none" stroke="#c6c6c6" stroke-width=".6"/></svg>
<div class="t" style="left:666.1px;top:205.6px;font-size:4.6px;color:#d8d8d8;font-feature-settings:'palt'">リンク</div>
<svg style="left:655.45px;top:215.15px" width="7.7" height="7.7" viewBox="0 0 7 7"><path d="M.5 .8 H4.4 V4.6 H.5Z M2.6 2.6 H6.5 V6.6 H2.6Z" fill="none" stroke="#c6c6c6" stroke-width="0.7"/></svg>
<div class="t" style="left:666.1px;top:216.6px;font-size:4.6px;color:#d8d8d8;font-feature-settings:'palt'">アートボード</div>
<svg style="left:655.45px;top:231.15px" width="7.7" height="7.7" viewBox="0 0 7 7"><path d="M.6 1 H6.4 V6.4 H.6Z" fill="none" stroke="#c6c6c6" stroke-width="0.7"/><rect x="3.6" y="1" width="1.6" height="2.2" fill="#c6c6c6"/><path d="M1.6 2.4 V5.4 H4.4" fill="none" stroke="#c6c6c6" stroke-width="0.5"/></svg>
<div class="t" style="left:666.1px;top:232.6px;font-size:4.6px;color:#d8d8d8;font-feature-settings:'palt'">CC ライブラリ</div>
<svg style="left:655.45px;top:246.15px" width="7.7" height="7.7" viewBox="0 0 7 7"><path d="M.4 3 C1.4 1.4 3 1 4.4 1.8 C5.4 1 6.4 1.6 6.8 2.6 C6.8 4.6 5 6 3.4 5.8 C2 5.4 1 4.4 .4 3Z" fill="none" stroke="#c6c6c6" stroke-width="0.8"/><path d="M2 3 C3 3.8 4.2 3.8 5.4 3" fill="none" stroke="#c6c6c6" stroke-width="0.6"/></svg>
<div class="t" style="left:666.1px;top:248.4px;font-size:3.6px;color:#d0d0d0;font-weight:bold;font-feature-settings:'palt'">wrm</div>
<svg style="left:655.45px;top:256.65px" width="7.7" height="7.7" viewBox="0 0 7 7"><path d="M1.2 .6 V6.6 M5.8 .6 V6.6" fill="none" stroke="#c6c6c6" stroke-width="0.6"/><rect x="0.4" y="0.2" width="1.6" height="1.2" fill="#c6c6c6"/><rect x="5" y="0.2" width="1.6" height="1.2" fill="#c6c6c6"/><rect x="0.4" y="5.8" width="1.6" height="1.2" fill="#c6c6c6"/><rect x="5" y="5.8" width="1.6" height="1.2" fill="#c6c6c6"/><rect x="0.4" y="3" width="1.6" height="1.2" fill="#c6c6c6"/><rect x="5" y="3" width="1.6" height="1.2" fill="#c6c6c6"/></svg>
<div class="t" style="left:666.1px;top:258.1px;font-size:4.6px;color:#d8d8d8;font-feature-settings:'palt'">変形</div>
<svg style="left:655.45px;top:267.55px" width="7.7" height="7.7" viewBox="0 0 7 7"><rect x="0.3" y="0.2" width="0.7" height="6.8" fill="#c6c6c6"/><rect x="1.6" y="1.6" width="2.6" height="1.8" fill="#c6c6c6"/><rect x="1.6" y="4.2" width="4.8" height="1.8" fill="#c6c6c6"/></svg>
<div class="t" style="left:666.1px;top:269.0px;font-size:4.6px;color:#d8d8d8;font-feature-settings:'palt'">整列</div>
<svg style="left:655.45px;top:278.15px" width="7.7" height="7.7" viewBox="0 0 7 7"><rect x="0.4" y="0.6" width="3.6" height="3.6" fill="#c6c6c6"/><path d="M2.8 2.8 H6.4 V6.4 H2.8Z" fill="none" stroke="#c6c6c6" stroke-width="0.7"/><rect x="3" y="3" width="1" height="1" fill="#535353"/></svg>
<div class="t" style="left:666.1px;top:279.6px;font-size:4.6px;color:#d8d8d8;font-feature-settings:'palt'">パスファインダ...</div>
<div class="a" style="left:645.6px;top:259px;width:4.6px;height:11.5px;background:#6a6a6a;border-radius:2.3px"></div>
<div class="t" style="left:646.2px;top:83.6px;font-size:4.2px;color:#9a9a9a;">⌃</div>
<div class="t" style="left:646.2px;top:443.4px;font-size:4.2px;color:#9a9a9a;">⌄</div>
<!--TOOLS-->
<div class="t" style="left:702px;width:26px;text-align:center;top:85.5px;font-size:3.6px;color:#d0d0d0;font-weight:bold">選択</div>
<div class="a" style="left:704.2px;top:90.8px;width:10.6px;height:8.4px;background:#2d2d2d;"></div>
<svg style="left:705.2px;top:91.0px" width="8.0" height="8.0" viewBox="0 0 8 8"><path d="M1.6 .8 L6.8 4 L4 4.6 L1.6 7.2Z" fill="none" stroke="#d6d6d6" stroke-width="0.8" stroke-linejoin="round"/></svg>
<svg style="left:717.0px;top:91.0px" width="8.0" height="8.0" viewBox="0 0 8 8"><path d="M1.4 .6 L6.8 4.2 L3.8 4.6 L1.4 7.4Z" fill="#d6d6d6" stroke="#d6d6d6" stroke-width="0.4" stroke-linejoin="round"/><rect x="7.2" y="6.6" width="0.9" height="0.9" fill="#d6d6d6"/></svg>
<svg style="left:705.2px;top:100.6px" width="8.0" height="8.0" viewBox="0 0 8 8"><path d="M2 2.4 C3 1.2 5.4 1.2 6.2 2.6 C6.8 3.8 6 5 5 5.2" fill="none" stroke="#d6d6d6" stroke-width="0.9" stroke-linejoin="round"/><path d="M3.4 3 L6.8 6 L4.8 6 L3.6 7.4Z" fill="#d6d6d6" stroke="#d6d6d6" stroke-width="0.3" stroke-linejoin="round"/><path d="M1.4 4.4 L2.6 5.6" fill="none" stroke="#d6d6d6" stroke-width="0.8" stroke-linejoin="round"/></svg>
<div class="t" style="left:702px;width:26px;text-align:center;top:111.5px;font-size:3.6px;color:#d0d0d0;font-weight:bold">シェイプ</div>
<svg style="left:705.2px;top:117.0px" width="8.0" height="8.0" viewBox="0 0 8 8"><path d="M1 1.2 H6.6 V6 H1Z" fill="#646464" stroke="#d6d6d6" stroke-width="0.7" stroke-linejoin="round"/><rect x="7" y="6.8" width="0.9" height="0.9" fill="#d6d6d6"/></svg>
<svg style="left:717.0px;top:117.0px" width="8.0" height="8.0" viewBox="0 0 8 8"><path d="M1.6 2 L4 1 L6.4 2 L7.2 4 L6.4 5.8 L4 6.6 L1.6 5.8 L.8 4Z" fill="#646464" stroke="#d6d6d6" stroke-width="0.7" stroke-linejoin="round"/></svg>
<svg style="left:705.2px;top:125.5px" width="8.0" height="8.0" viewBox="0 0 8 8"><path d="M2.4 1.2 H5.6 L7.2 4 L5.6 6.8 H2.4 L.8 4Z" fill="#646464" stroke="#d6d6d6" stroke-width="0.7" stroke-linejoin="round"/></svg>
<svg style="left:717.0px;top:125.5px" width="8.0" height="8.0" viewBox="0 0 8 8"><circle cx="3.2" cy="3.6" r="2.4" fill="#646464" stroke="#d6d6d6" stroke-width=".7"/><path d="M3 6.8 L7.4 2.2" fill="none" stroke="#d6d6d6" stroke-width="1.1" stroke-linejoin="round"/></svg>
<div class="t" style="left:702px;width:26px;text-align:center;top:136.9px;font-size:3.6px;color:#d0d0d0;font-weight:bold">描画</div>
<svg style="left:705.2px;top:143.0px" width="8.0" height="8.0" viewBox="0 0 8 8"><path d="M1 7 L1.6 5 L5.6 1 L7 2.4 L3 6.4Z" fill="#d6d6d6" stroke="#d6d6d6" stroke-width="0.3" stroke-linejoin="round"/></svg>
<svg style="left:717.0px;top:143.0px" width="8.0" height="8.0" viewBox="0 0 8 8"><path d="M3.4 1.4 L6.6 1.4 L7.2 3 L4 6.6 L1.6 6.6 L.8 5.2Z" fill="none" stroke="#d6d6d6" stroke-width="0.8" stroke-linejoin="round"/><path d="M2 3.6 L4.6 6" fill="none" stroke="#d6d6d6" stroke-width="0.7" stroke-linejoin="round"/><rect x="7.2" y="6.8" width="0.9" height="0.9" fill="#d6d6d6"/></svg>
<svg style="left:705.2px;top:152.2px" width="8.0" height="8.0" viewBox="0 0 8 8"><path d="M6.8 .8 L7.4 1.4 L3.6 5.6 L2.8 4.8Z" fill="#d6d6d6" stroke="#d6d6d6" stroke-width="0.3" stroke-linejoin="round"/><path d="M1 7.2 C1 6 1.6 5.2 2.6 5.2 L3.4 6 C3.4 7 2.2 7.4 1 7.2Z" fill="#d6d6d6" stroke="#d6d6d6" stroke-width="0.3" stroke-linejoin="round"/><rect x="5.8" y="6.8" width="0.9" height="0.9" fill="#d6d6d6"/></svg>
<svg style="left:717.0px;top:152.2px" width="8.0" height="8.0" viewBox="0 0 8 8"><path d="M1 3 C1 5 1.6 6.6 3 6.8" fill="none" stroke="#d6d6d6" stroke-width="0.7" stroke-linejoin="round"/><path d="M3 6 L5.8 2.4 L7.4 3.6 L4.6 7.2Z" fill="#d6d6d6" stroke="#d6d6d6" stroke-width="0.3" stroke-linejoin="round"/><path d="M5.4 1.6 L7.6 3.2" fill="none" stroke="#d6d6d6" stroke-width="0.9" stroke-linejoin="round"/></svg>
<svg style="left:705.2px;top:161.8px" width="8.0" height="8.0" viewBox="0 0 8 8"><path d="M1.4 7 L2.4 1 L6.6 6" fill="none" stroke="#d6d6d6" stroke-width="0.7" stroke-linejoin="round"/><rect x="6.6" y="6.8" width="0.9" height="0.9" fill="#d6d6d6"/></svg>
<svg style="left:717.0px;top:161.8px" width="8.0" height="8.0" viewBox="0 0 8 8"><path d="M.8 2.6 L3 3.6" fill="none" stroke="#d6d6d6" stroke-width="0.8" stroke-linejoin="round"/><path d="M2.6 5.6 L5.6 2 L7.4 3.4 L4.4 7Z" fill="#d6d6d6" stroke="#d6d6d6" stroke-width="0.3" stroke-linejoin="round"/><path d="M5.2 1.4 L7.8 3.2" fill="none" stroke="#d6d6d6" stroke-width="0.9" stroke-linejoin="round"/></svg>
<svg style="left:705.2px;top:171.2px" width="8.0" height="8.0" viewBox="0 0 8 8"><path d="M.8 7.2 L1.4 5.2 L5.6 1 L7 2.4 L2.8 6.6Z" fill="#d6d6d6" stroke="#d6d6d6" stroke-width="0.3" stroke-linejoin="round"/><path d="M4.2 2.4 L5.6 3.8" fill="none" stroke="#535353" stroke-width="0.5" stroke-linejoin="round"/></svg>
<div class="t" style="left:702px;width:26px;text-align:center;top:181.9px;font-size:3.6px;color:#d0d0d0;font-weight:bold">変形</div>
<svg style="left:705.2px;top:187.2px" width="8.0" height="8.0" viewBox="0 0 8 8"><path d="M2 4.6 C.6 4.6 .6 2.6 2 2.4 C2.2 1 4.4 .8 5 2.2 C6.4 2.2 6.6 4 5.6 4.4" fill="none" stroke="#d6d6d6" stroke-width="0.8" stroke-linejoin="round"/><path d="M3.6 3.6 L7 6 L5 6 L4 7.4Z" fill="#d6d6d6" stroke="#d6d6d6" stroke-width="0.3" stroke-linejoin="round"/></svg>
<svg style="left:717.0px;top:187.2px" width="8.0" height="8.0" viewBox="0 0 8 8"><path d="M2.2 1.8 A2.9 2.9 0 1 1 1.4 5.4" fill="none" stroke="#d6d6d6" stroke-width="0.9" stroke-linejoin="round"/><path d="M.6 1.4 L3 1 L2.6 3.2Z" fill="#d6d6d6" stroke="#d6d6d6" stroke-width="0.2" stroke-linejoin="round"/></svg>
<svg style="left:705.2px;top:196.8px" width="8.0" height="8.0" viewBox="0 0 8 8"><path d="M.8 3.4 H4.6 V7.2 H.8Z M3 .8 H7.2 V5 H4.6 M3 3.4 V.8" fill="none" stroke="#d6d6d6" stroke-width="0.7" stroke-linejoin="round"/></svg>
<svg style="left:717.0px;top:196.8px" width="8.0" height="8.0" viewBox="0 0 8 8"><path d="M1.2 6.8 L2.4 2.8 H7.2 L6 6.8Z" fill="#d6d6d6" stroke="#d6d6d6" stroke-width="0.4" stroke-linejoin="round"/><path d="M4 .6 L5.6 1.8 L4 2.6" fill="none" stroke="#d6d6d6" stroke-width="0.7" stroke-linejoin="round"/></svg>
<svg style="left:705.2px;top:206.0px" width="8.0" height="8.0" viewBox="0 0 8 8"><path d="M.8 1.4 L3.2 2.2 V5.2 L.8 4.4Z" fill="#d6d6d6" stroke="#d6d6d6" stroke-width="0.3" stroke-linejoin="round"/><path d="M3 3.2 H5.2 V5.6 H3Z M4.6 4.6 H7 V7.2 H4.6Z" fill="none" stroke="#d6d6d6" stroke-width="0.7" stroke-linejoin="round"/></svg>
<svg style="left:717.0px;top:206.0px" width="8.0" height="8.0" viewBox="0 0 8 8"><path d="M.8 1.6 L3.2 4 L.8 6.4Z" fill="none" stroke="#d6d6d6" stroke-width="0.7" stroke-linejoin="round"/><path d="M7.2 1.6 L4.8 4 L7.2 6.4Z" fill="#d6d6d6" stroke="#d6d6d6" stroke-width="0.5" stroke-linejoin="round"/><rect x="3.7" y="0.8" width="0.6" height="6.4" fill="#d6d6d6"/></svg>
<svg style="left:705.2px;top:215.5px" width="8.0" height="8.0" viewBox="0 0 8 8"><path d="M.8 7 L4 3.8" fill="none" stroke="#d6d6d6" stroke-width="0.8" stroke-linejoin="round"/><path d="M2.4 1.4 L7 3.4 L4.6 4.2 L6.4 6 L2.8 4.4Z" fill="#d6d6d6" stroke="#d6d6d6" stroke-width="0.3" stroke-linejoin="round"/></svg>
<div class="t" style="left:702px;width:26px;text-align:center;top:226.7px;font-size:3.6px;color:#d0d0d0;font-weight:bold">文字</div>
<svg style="left:705.2px;top:231.4px" width="8.0" height="8.0" viewBox="0 0 8 8"><ellipse cx="4" cy="4" rx="3.6" ry="3" fill="#d6d6d6"/><text x="1.9" y="6.1" font-size="6" font-family="Liberation Serif, serif" font-weight="bold" fill="#535353">T</text></svg>
<svg style="left:717.0px;top:231.4px" width="8.0" height="8.0" viewBox="0 0 8 8"><path d="M.8 4.6 C2 2 3.6 2.2 4.4 4 C5.2 5.6 6.4 5.4 7.4 3" fill="none" stroke="#d6d6d6" stroke-width="0.7" stroke-linejoin="round"/><path d="M3.6 1.4 L5.6 2.6" fill="none" stroke="#d6d6d6" stroke-width="0.8" stroke-linejoin="round"/></svg>
<svg style="left:705.2px;top:241.5px" width="8.0" height="8.0" viewBox="0 0 8 8"><text x="2.6" y="6.9" font-size="7.6" font-family="Liberation Serif, serif" fill="#d6d6d6">T</text><path d="M1.2 1.2 V6.8 M.4 5.8 L1.2 6.9 L2 5.8" fill="none" stroke="#d6d6d6" stroke-width="0.6" stroke-linejoin="round"/></svg>
<svg style="left:717.0px;top:241.5px" width="8.0" height="8.0" viewBox="0 0 8 8"><text x="1.3" y="7" font-size="8" font-family="Liberation Serif, serif" font-weight="bold" fill="#d6d6d6">T</text></svg>
<div class="t" style="left:702px;width:26px;text-align:center;top:251.6px;font-size:3.6px;color:#d0d0d0;font-weight:bold">ナビゲーション</div>
<svg style="left:705.2px;top:257.0px" width="8.0" height="8.0" viewBox="0 0 8 8"><circle cx="3.2" cy="3.2" r="2.4" fill="none" stroke="#d6d6d6" stroke-width=".8"/><path d="M5 5 L7.4 7.4" fill="none" stroke="#d6d6d6" stroke-width="1" stroke-linejoin="round"/></svg>
<svg style="left:717.0px;top:257.0px" width="8.0" height="8.0" viewBox="0 0 8 8"><path d="M2 7.2 L1 4.4 L1.8 4 L2.4 4.8 V1.8 H3.2 V1 H4.2 V1.4 H5.2 V2 H6.2 V5.4 L5.6 7.2Z" fill="#d6d6d6" stroke="#d6d6d6" stroke-width="0.4" stroke-linejoin="round"/></svg>
<svg style="left:705.2px;top:267.0px" width="8.0" height="8.0" viewBox="0 0 8 8"><path d="M1 3.4 L3.4 1.2 L6.2 4.2 L3.8 6.6Z" fill="#d6d6d6" stroke="#d6d6d6" stroke-width="0.3" stroke-linejoin="round"/><path d="M5 5.4 L7.2 7.4 M1 1 L2 2 M.6 5.6 L1.6 5.2" fill="none" stroke="#d6d6d6" stroke-width="0.7" stroke-linejoin="round"/></svg>
<svg style="left:717.0px;top:267.0px" width="8.0" height="8.0" viewBox="0 0 8 8"><path d="M2.2 .6 V6 H7.6 M.4 2.4 H5.8 V7.6" fill="none" stroke="#d6d6d6" stroke-width="0.7" stroke-linejoin="round"/><rect x="3.4" y="3.6" width="1.6" height="1.6" fill="#8a8a8a"/></svg>
<svg style="left:705.2px;top:276.0px" width="8.0" height="8.0" viewBox="0 0 8 8"><path d="M.8 7.2 L7 1" fill="none" stroke="#d6d6d6" stroke-width="1.3" stroke-linejoin="round"/><path d="M2.4 4.4 L3.4 5.4 M3.8 3 L4.8 4 M5.2 1.6 L6.2 2.6" fill="none" stroke="#535353" stroke-width="0.5" stroke-linejoin="round"/></svg>
<div class="t" style="left:702px;width:26px;text-align:center;top:287.1px;font-size:3.6px;color:#d0d0d0;font-weight:bold">カラー</div>
<svg style="left:705.2px;top:293.2px" width="8.0" height="8.0" viewBox="0 0 8 8"><defs><linearGradient id="tg" x1="0" x2="1"><stop offset="0" stop-color="#fff"/><stop offset="1" stop-color="#3a3a3a"/></linearGradient></defs><rect x=".8" y="1" width="5.8" height="5.6" fill="url(#tg)" stroke="#d6d6d6" stroke-width=".7"/><rect x="7" y="6.8" width="0.9" height="0.9" fill="#d6d6d6"/></svg>
<svg style="left:717.0px;top:293.2px" width="8.0" height="8.0" viewBox="0 0 8 8"><path d="M.8 7.2 L1.2 5.6 L4.6 2.2 L5.8 3.4 L2.4 6.8Z" fill="none" stroke="#d6d6d6" stroke-width="0.7" stroke-linejoin="round"/><path d="M4.4 1.6 L5.8 .6 L7.4 2.2 L6.4 3.6Z" fill="#d6d6d6" stroke="#d6d6d6" stroke-width="0.3" stroke-linejoin="round"/></svg>
<div class="a" style="left:710.6px;top:312.9px;width:13.8px;height:12.2px;background:#fff;"></div>
<svg style="left:710.6px;top:312.9px" width="13.8" height="12.2" viewBox="0 0 13.8 12.2"><rect x="3.4" y="3.2" width="7" height="5.8" fill="#535353"/><path d="M.3 11.9 L13.5 .3" stroke="#e8202a" stroke-width="1"/></svg>
<div class="a" style="left:703.6px;top:305px;width:13.6px;height:13px;background:#565656;border:.6px solid #8a8a8a"></div>
<div class="t" style="left:709.2px;top:308.7px;font-size:5.6px;color:#ececec;">?</div>
<svg style="left:719.8px;top:304.2px" width="5.6" height="5.6" viewBox="0 0 8 8"><path d="M1.6 2.4 H5.6 V6.4 M1.6 2.4 L2.8 1.2 M1.6 2.4 L2.8 3.6 M5.6 6.4 L4.4 5.2 M5.6 6.4 L6.8 5.2" fill="none" stroke="#7c7c7c" stroke-width="0.5" stroke-linejoin="round"/></svg>
<div class="a" style="left:704.6px;top:321.2px;width:3.2px;height:3px;background:#fff;border:.5px solid #222"></div>
<div class="a" style="left:703.2px;top:319.8px;width:3.2px;height:3px;background:#fff;border:.5px solid #222"></div>
<div class="a" style="left:704.6px;top:329.2px;width:5px;height:5px;background:#a0a0a0;border:.6px solid #d8d8d8"></div>
<div class="a" style="left:712.4px;top:329.2px;width:5px;height:5px;border:.6px solid #d8d8d8;background:linear-gradient(90deg,#fff,#333)"></div>
<div class="a" style="left:719.4px;top:328.4px;width:6.6px;height:6.6px;background:#2d2d2d;"></div>
<div class="a" style="left:720.2px;top:329.2px;width:5px;height:5px;background:#fff;"></div>
<svg style="left:720.2px;top:329.2px" width="5" height="5" viewBox="0 0 5 5"><path d="M.2 4.8 L4.8 .2" stroke="#e8202a" stroke-width=".9"/></svg>
<div class="a" style="left:703.8px;top:337.6px;width:6.8px;height:7.2px;background:#2d2d2d;"></div>
<svg style="left:704.2px;top:338.4px" width="6.0" height="6.0" viewBox="0 0 8 8"><circle cx="3" cy="3" r="2.2" fill="#d6d6d6"/><rect x="3.4" y="3.4" width="3.4" height="3.4" fill="#8c8c8c" stroke="#d6d6d6" stroke-width=".5"/></svg>
<svg style="left:712.0px;top:338.4px" width="6.0" height="6.0" viewBox="0 0 8 8"><rect x="3.4" y="3.4" width="3.4" height="3.4" fill="#8c8c8c" stroke="#d6d6d6" stroke-width=".5"/><circle cx="3" cy="3" r="2.2" fill="#d6d6d6"/></svg>
<svg style="left:719.4px;top:338.4px" width="6.0" height="6.0" viewBox="0 0 8 8"><circle cx="3" cy="3" r="2.2" fill="none" stroke="#6e6e6e" stroke-width=".6"/><rect x="3.4" y="3.4" width="3.4" height="3.4" fill="none" stroke="#6e6e6e" stroke-width=".5"/></svg>
<svg style="left:711.3px;top:347.6px" width="8.0" height="8.0" viewBox="0 0 8 8"><path d="M2.6 .8 H7.4 V4.6 H2.6Z" fill="#646464" stroke="#d6d6d6" stroke-width="0.7" stroke-linejoin="round"/><path d="M.6 3 H5.4 V6.8 H.6Z" fill="#646464" stroke="#d6d6d6" stroke-width="0.7" stroke-linejoin="round"/></svg>
<div class="a" style="left:712.2px;top:363.5px;width:1.1px;height:1.1px;background:#cfcfcf;border-radius:50%"></div>
<div class="a" style="left:714.5px;top:363.5px;width:1.1px;height:1.1px;background:#cfcfcf;border-radius:50%"></div>
<div class="a" style="left:716.8px;top:363.5px;width:1.1px;height:1.1px;background:#cfcfcf;border-radius:50%"></div>
<svg style="left:711.8px;top:370.6px" width="6.4" height="6.4" viewBox="0 0 8 8"><path d="M1 7 L3.4 4.6 M3.4 6.2 V4.6 H1.8" fill="none" stroke="#d6d6d6" stroke-width="0.7" stroke-linejoin="round"/><path d="M7 1 L4.6 3.4 M4.6 1.8 V3.4 H6.2" fill="none" stroke="#d6d6d6" stroke-width="0.7" stroke-linejoin="round"/></svg>
<!--PANEL-->
<div class="a" style="left:440px;top:129.5px;width:117.6px;height:262.8px;background:#535353;box-shadow:0 0 .8px rgba(0,0,0,.5)"></div>
<div class="a" style="left:496px;top:132.6px;width:6px;height:0.8px;background:#454545;"></div>
<svg style="left:450px;top:138px" width="20" height="6" viewBox="0 0 20 6"><path d="M1 1.8 H4.4 A1.8 1.8 0 0 1 4.4 5.4 H3.2 M2.2 .6 L1 1.8 L2.2 3" fill="none" stroke="#7e7e7e" stroke-width=".6"/><path d="M18.6 1.8 H15.2 A1.8 1.8 0 0 0 15.2 5.4 H16.4 M17.4 .6 L18.6 1.8 L17.4 3" fill="none" stroke="#7e7e7e" stroke-width=".6"/></svg>
<div class="a" style="left:516px;top:136px;width:33.5px;height:7.6px;background:#5d5d5d;border-radius:.8px"></div>
<div class="t" style="left:524.2px;top:137.5px;font-size:4.6px;color:#8c8c8c;letter-spacing:.15px">リセット</div>
<div class="t" style="left:444px;top:149.6px;font-size:4.8px;color:#d8d8d8;">再配色</div>
<div class="t" style="left:467px;top:149.6px;font-size:4.8px;color:#f0f0f0;letter-spacing:.08px">生成再配色</div>
<div class="a" style="left:467px;top:155.3px;width:24.4px;height:0.7px;background:#e6e6e6;"></div>
<div class="a" style="left:545px;top:163.4px;width:8.2px;height:5.8px;background:#535353;border:.5px solid #6e6e6e;border-radius:.8px"></div>
<div class="a" style="left:547.2px;top:165.2px;width:3.8px;height:2.2px;background:#8a8a8a;"></div>
<div class="a" style="left:443px;top:171.5px;width:110.6px;height:18.6px;background:#fff;border:.7px solid #3f7fd0"></div>
<div class="t" style="left:445.7px;top:174px;font-size:4.6px;color:#333;font-weight:400;letter-spacing:.1px">赤と青のパステルカラー</div>
<div class="t" style="left:548.3px;top:178.2px;font-size:6.6px;color:#222;font-weight:bold">×</div>
<div class="t" style="left:444px;top:192.7px;font-size:4.6px;color:#d8d8d8;">カラー</div>
<div class="a" style="left:443.8px;top:199px;width:9px;height:9px;background:#535353;border:.5px solid #707070;border-radius:.6px"></div>
<svg style="left:445.8px;top:201px" width="5" height="5" viewBox="0 0 5 5"><path d="M2.5 .4 V4.6 M.4 2.5 H4.6" stroke="#e0e0e0" stroke-width="1.1"/></svg>
<div class="a" style="left:528px;top:198.5px;width:26px;height:10px;background:#555;border:.5px solid #6e6e6e;border-radius:.8px"></div>
<svg style="left:532px;top:200.4px" width="7" height="7" viewBox="0 0 7 7"><path d="M3.4 1.2 H.9 V6.1 H5.8 V3.8" fill="none" stroke="#dcdcdc" stroke-width=".7"/><path d="M2.6 4.4 C2.8 2.8 3.8 2 5.2 2 M4.4 .9 L5.6 2 L4.4 3.1" fill="none" stroke="#dcdcdc" stroke-width=".6"/><path d="M6.2 .2 L6.4 .8 L7 1 L6.4 1.2 L6.2 1.8 L6 1.2 L5.4 1 L6 .8Z" fill="#dcdcdc"/></svg>
<div class="t" style="left:540.4px;top:201.2px;font-size:4.8px;color:#e8e8e8;font-weight:bold">生成</div>
<div class="a" style="left:443.8px;top:213.2px;width:110px;height:0.5px;background:#474747;"></div>
<svg style="left:443.4px;top:219.2px" width="3" height="2" viewBox="0 0 3 2"><path d="M.2 .3 L1.5 1.6 L2.8 .3" fill="none" stroke="#cfcfcf" stroke-width=".6"/></svg>
<div class="t" style="left:448.8px;top:217.9px;font-size:4.6px;color:#d4d4d4;font-feature-settings:'palt';letter-spacing:.3px">サンプルプロンプト</div>
<div class="a" style="left:546.2px;top:222px;width:2.4px;height:98px;background:#6b6b6b;border-radius:1.2px"></div>
<div class="a" style="left:546.2px;top:320px;width:2.4px;height:18px;background:#4a4a4a;"></div>
<svg style="left:546px;top:341px" width="3" height="2" viewBox="0 0 3 2"><path d="M.2 .3 L1.5 1.6 L2.8 .3" fill="none" stroke="#a8a8a8" stroke-width=".6"/></svg>
<svg style="left:444.6px;top:228px" width="29" height="28.6" viewBox="0 0 29 28.5" preserveAspectRatio="none"><rect width="29" height="28.5" fill="#454545"/><g opacity=".8"><ellipse cx="6.2" cy="25.8" rx="4" ry="1.5" fill="#e4e0e4"/><path d="M8.5 25.4 L16.6 21.2 L17.6 22.2 L10 26.6Z" fill="#e4e0e4" opacity=".8"/><ellipse cx="22.8" cy="25.8" rx="3.6" ry="1.4" fill="#e4e0e4"/></g><path d="M4.6 14.6 H8.9 L8.8 24.6 H7.2 L6.8 17.6 L6.3 23.9 H4.8Z" fill="#7d7662"/><path d="M4.4 23.8 H6.4 V25 H3.6Z M7 24.6 H8.9 V25.8 H6.3Z" fill="#4a2e22"/><path d="M5.4 5.2 L8.2 5.2 L10.4 6.4 L11 11.6 L9.6 15.2 L4.4 15 L3.8 11 L4.2 6.6Z" fill="#c9a875"/><path d="M6 5.2 L7.8 5.2 L6.8 8.6Z" fill="#b8b8c0"/><circle cx="6.9" cy="3.4" r="1.8" fill="#e8b898"/><path d="M4.9 3.2 C4.8 1 9 .6 9.2 3 C9.2 4 8.8 4.6 8.6 5 C8.6 3.6 7.6 2.8 5.4 3.2Z" fill="#5e3e2c"/><path d="M21.6 19.6 H22.8 L22.6 24.8 H21.8Z M23.4 19.6 H24.6 L24.2 25.4 H23.4Z" fill="#e8b898"/><path d="M20.8 24.6 H22.8 V25.4 H20.8Z M22.4 25.4 H24.4 V26.2 H22.4Z" fill="#4a2e22"/><path d="M20.8 8.4 L16.3 11 L16.6 12 L21 10.4Z" fill="#e8b898"/><path d="M25.4 7.6 L26.2 15 L25.4 15.2 L24.8 9Z" fill="#e8b898"/><path d="M21.2 5.4 L24.4 5.4 L25.8 6.6 L26 10.4 L25.2 10.6 L25.4 20 L20.6 19.6 L21 11.6 L20 8.6 L20.4 6.4Z" fill="#88836e"/><circle cx="22.6" cy="3.4" r="1.8" fill="#e8b898"/><path d="M20.8 3 C20.8 .8 25 .6 25 3.2 C25.6 3.6 25.6 4.8 24.6 5 C24.6 3.8 23.6 2.8 21.2 3.2Z" fill="#151515"/></svg>
<div class="t" style="left:445.8px;top:257.4px;font-size:4.6px;color:#dedede;font-feature-settings:'palt'">サーモンの...</div>
<svg style="left:480.2px;top:228px" width="29" height="28.6" viewBox="0 0 29 28.5" preserveAspectRatio="none"><rect width="29" height="28.5" fill="#454545"/><g opacity=".8"><ellipse cx="6.2" cy="25.8" rx="4" ry="1.5" fill="#f0f0ee"/><path d="M8.5 25.4 L16.6 21.2 L17.6 22.2 L10 26.6Z" fill="#f0f0ee" opacity=".8"/><ellipse cx="22.8" cy="25.8" rx="3.6" ry="1.4" fill="#f0f0ee"/></g><path d="M4.6 14.6 H8.9 L8.8 24.6 H7.2 L6.8 17.6 L6.3 23.9 H4.8Z" fill="#b3ac96"/><path d="M4.4 23.8 H6.4 V25 H3.6Z M7 24.6 H8.9 V25.8 H6.3Z" fill="#8a6a4a"/><path d="M5.4 5.2 L8.2 5.2 L10.4 6.4 L11 11.6 L9.6 15.2 L4.4 15 L3.8 11 L4.2 6.6Z" fill="#e0d6c2"/><path d="M6 5.2 L7.8 5.2 L6.8 8.6Z" fill="#f0f0f0"/><circle cx="6.9" cy="3.4" r="1.8" fill="#f2d2b6"/><path d="M4.9 3.2 C4.8 1 9 .6 9.2 3 C9.2 4 8.8 4.6 8.6 5 C8.6 3.6 7.6 2.8 5.4 3.2Z" fill="#c69c6e"/><path d="M21.6 19.6 H22.8 L22.6 24.8 H21.8Z M23.4 19.6 H24.6 L24.2 25.4 H23.4Z" fill="#f2d2b6"/><path d="M20.8 24.6 H22.8 V25.4 H20.8Z M22.4 25.4 H24.4 V26.2 H22.4Z" fill="#8a6a4a"/><path d="M20.8 8.4 L16.3 11 L16.6 12 L21 10.4Z" fill="#f2d2b6"/><path d="M25.4 7.6 L26.2 15 L25.4 15.2 L24.8 9Z" fill="#f2d2b6"/><path d="M21.2 5.4 L24.4 5.4 L25.8 6.6 L26 10.4 L25.2 10.6 L25.4 20 L20.6 19.6 L21 11.6 L20 8.6 L20.4 6.4Z" fill="#c6c1ad"/><circle cx="22.6" cy="3.4" r="1.8" fill="#f2d2b6"/><path d="M20.8 3 C20.8 .8 25 .6 25 3.2 C25.6 3.6 25.6 4.8 24.6 5 C24.6 3.8 23.6 2.8 21.2 3.2Z" fill="#8a5a3a"/></svg>
<div class="t" style="left:481.4px;top:257.4px;font-size:4.6px;color:#dedede;font-feature-settings:'palt'">砂色のピーチ</div>
<svg style="left:515.6px;top:228px" width="29" height="28.6" viewBox="0 0 29 28.5" preserveAspectRatio="none"><rect width="29" height="28.5" fill="#454545"/><g opacity=".8"><ellipse cx="6.2" cy="25.8" rx="4" ry="1.5" fill="#eeeecc"/><path d="M8.5 25.4 L16.6 21.2 L17.6 22.2 L10 26.6Z" fill="#eeeecc" opacity=".8"/><ellipse cx="22.8" cy="25.8" rx="3.6" ry="1.4" fill="#eeeecc"/></g><path d="M4.6 14.6 H8.9 L8.8 24.6 H7.2 L6.8 17.6 L6.3 23.9 H4.8Z" fill="#8fb0d8"/><path d="M4.4 23.8 H6.4 V25 H3.6Z M7 24.6 H8.9 V25.8 H6.3Z" fill="#a8c0d0"/><path d="M5.4 5.2 L8.2 5.2 L10.4 6.4 L11 11.6 L9.6 15.2 L4.4 15 L3.8 11 L4.2 6.6Z" fill="#a9c3e2"/><path d="M6 5.2 L7.8 5.2 L6.8 8.6Z" fill="#e0e8f4"/><circle cx="6.9" cy="3.4" r="1.8" fill="#ccd8ec"/><path d="M4.9 3.2 C4.8 1 9 .6 9.2 3 C9.2 4 8.8 4.6 8.6 5 C8.6 3.6 7.6 2.8 5.4 3.2Z" fill="#6a5aa0"/><path d="M21.6 19.6 H22.8 L22.6 24.8 H21.8Z M23.4 19.6 H24.6 L24.2 25.4 H23.4Z" fill="#ccd8ec"/><path d="M20.8 24.6 H22.8 V25.4 H20.8Z M22.4 25.4 H24.4 V26.2 H22.4Z" fill="#a8c0d0"/><path d="M20.8 8.4 L16.3 11 L16.6 12 L21 10.4Z" fill="#ccd8ec"/><path d="M25.4 7.6 L26.2 15 L25.4 15.2 L24.8 9Z" fill="#ccd8ec"/><path d="M21.2 5.4 L24.4 5.4 L25.8 6.6 L26 10.4 L25.2 10.6 L25.4 20 L20.6 19.6 L21 11.6 L20 8.6 L20.4 6.4Z" fill="#9cbadc"/><circle cx="22.6" cy="3.4" r="1.8" fill="#ccd8ec"/><path d="M20.8 3 C20.8 .8 25 .6 25 3.2 C25.6 3.6 25.6 4.8 24.6 5 C24.6 3.8 23.6 2.8 21.2 3.2Z" fill="#3a3a70"/></svg>
<div class="t" style="left:516.8000000000001px;top:257.4px;font-size:4.6px;color:#dedede;font-feature-settings:'palt'">ダークブル...</div>
<svg style="left:444.6px;top:269.4px" width="29" height="28.6" viewBox="0 0 29 28.5" preserveAspectRatio="none"><rect width="29" height="28.5" fill="#454545"/><g opacity=".8"><ellipse cx="6.2" cy="25.8" rx="4" ry="1.5" fill="#d8d8d8"/><path d="M8.5 25.4 L16.6 21.2 L17.6 22.2 L10 26.6Z" fill="#d8d8d8" opacity=".8"/><ellipse cx="22.8" cy="25.8" rx="3.6" ry="1.4" fill="#d8d8d8"/></g><path d="M4.6 14.6 H8.9 L8.8 24.6 H7.2 L6.8 17.6 L6.3 23.9 H4.8Z" fill="#6e7038"/><path d="M4.4 23.8 H6.4 V25 H3.6Z M7 24.6 H8.9 V25.8 H6.3Z" fill="#3a1a1a"/><path d="M5.4 5.2 L8.2 5.2 L10.4 6.4 L11 11.6 L9.6 15.2 L4.4 15 L3.8 11 L4.2 6.6Z" fill="#b4a84c"/><path d="M6 5.2 L7.8 5.2 L6.8 8.6Z" fill="#c8c070"/><circle cx="6.9" cy="3.4" r="1.8" fill="#e0a040"/><path d="M4.9 3.2 C4.8 1 9 .6 9.2 3 C9.2 4 8.8 4.6 8.6 5 C8.6 3.6 7.6 2.8 5.4 3.2Z" fill="#6a3a2a"/><path d="M21.6 19.6 H22.8 L22.6 24.8 H21.8Z M23.4 19.6 H24.6 L24.2 25.4 H23.4Z" fill="#e0a040"/><path d="M20.8 24.6 H22.8 V25.4 H20.8Z M22.4 25.4 H24.4 V26.2 H22.4Z" fill="#3a1a1a"/><path d="M20.8 8.4 L16.3 11 L16.6 12 L21 10.4Z" fill="#e0a040"/><path d="M25.4 7.6 L26.2 15 L25.4 15.2 L24.8 9Z" fill="#e0a040"/><path d="M21.2 5.4 L24.4 5.4 L25.8 6.6 L26 10.4 L25.2 10.6 L25.4 20 L20.6 19.6 L21 11.6 L20 8.6 L20.4 6.4Z" fill="#84884a"/><circle cx="22.6" cy="3.4" r="1.8" fill="#e0a040"/><path d="M20.8 3 C20.8 .8 25 .6 25 3.2 C25.6 3.6 25.6 4.8 24.6 5 C24.6 3.8 23.6 2.8 21.2 3.2Z" fill="#20140a"/></svg>
<div class="t" style="left:445.8px;top:298.79999999999995px;font-size:4.6px;color:#dedede;font-feature-settings:'palt'">気分が上が...</div>
<svg style="left:480.2px;top:269.4px" width="29" height="28.6" viewBox="0 0 29 28.5" preserveAspectRatio="none"><rect width="29" height="28.5" fill="#454545"/><g opacity=".8"><ellipse cx="6.2" cy="25.8" rx="4" ry="1.5" fill="#dcdcdc"/><path d="M8.5 25.4 L16.6 21.2 L17.6 22.2 L10 26.6Z" fill="#dcdcdc" opacity=".8"/><ellipse cx="22.8" cy="25.8" rx="3.6" ry="1.4" fill="#dcdcdc"/></g><path d="M4.6 14.6 H8.9 L8.8 24.6 H7.2 L6.8 17.6 L6.3 23.9 H4.8Z" fill="#807868"/><path d="M4.4 23.8 H6.4 V25 H3.6Z M7 24.6 H8.9 V25.8 H6.3Z" fill="#4a2a22"/><path d="M5.4 5.2 L8.2 5.2 L10.4 6.4 L11 11.6 L9.6 15.2 L4.4 15 L3.8 11 L4.2 6.6Z" fill="#e6c2a4"/><path d="M6 5.2 L7.8 5.2 L6.8 8.6Z" fill="#d0d0d0"/><circle cx="6.9" cy="3.4" r="1.8" fill="#e8b494"/><path d="M4.9 3.2 C4.8 1 9 .6 9.2 3 C9.2 4 8.8 4.6 8.6 5 C8.6 3.6 7.6 2.8 5.4 3.2Z" fill="#6e3e32"/><path d="M21.6 19.6 H22.8 L22.6 24.8 H21.8Z M23.4 19.6 H24.6 L24.2 25.4 H23.4Z" fill="#e8b494"/><path d="M20.8 24.6 H22.8 V25.4 H20.8Z M22.4 25.4 H24.4 V26.2 H22.4Z" fill="#4a2a22"/><path d="M20.8 8.4 L16.3 11 L16.6 12 L21 10.4Z" fill="#e8b494"/><path d="M25.4 7.6 L26.2 15 L25.4 15.2 L24.8 9Z" fill="#e8b494"/><path d="M21.2 5.4 L24.4 5.4 L25.8 6.6 L26 10.4 L25.2 10.6 L25.4 20 L20.6 19.6 L21 11.6 L20 8.6 L20.4 6.4Z" fill="#8a887c"/><circle cx="22.6" cy="3.4" r="1.8" fill="#e8b494"/><path d="M20.8 3 C20.8 .8 25 .6 25 3.2 C25.6 3.6 25.6 4.8 24.6 5 C24.6 3.8 23.6 2.8 21.2 3.2Z" fill="#241818"/></svg>
<div class="t" style="left:481.4px;top:298.79999999999995px;font-size:4.6px;color:#dedede;font-feature-settings:'palt'">テラコッタ...</div>
<svg style="left:515.6px;top:269.4px" width="29" height="28.6" viewBox="0 0 29 28.5" preserveAspectRatio="none"><rect width="29" height="28.5" fill="#454545"/><g opacity=".8"><ellipse cx="6.2" cy="25.8" rx="4" ry="1.5" fill="#d8f0d8"/><path d="M8.5 25.4 L16.6 21.2 L17.6 22.2 L10 26.6Z" fill="#d8f0d8" opacity=".8"/><ellipse cx="22.8" cy="25.8" rx="3.6" ry="1.4" fill="#d8f0d8"/></g><path d="M4.6 14.6 H8.9 L8.8 24.6 H7.2 L6.8 17.6 L6.3 23.9 H4.8Z" fill="#bcbc3c"/><path d="M4.4 23.8 H6.4 V25 H3.6Z M7 24.6 H8.9 V25.8 H6.3Z" fill="#d8e8c0"/><path d="M5.4 5.2 L8.2 5.2 L10.4 6.4 L11 11.6 L9.6 15.2 L4.4 15 L3.8 11 L4.2 6.6Z" fill="#e0da78"/><path d="M6 5.2 L7.8 5.2 L6.8 8.6Z" fill="#f0f0c0"/><circle cx="6.9" cy="3.4" r="1.8" fill="#f0e494"/><path d="M4.9 3.2 C4.8 1 9 .6 9.2 3 C9.2 4 8.8 4.6 8.6 5 C8.6 3.6 7.6 2.8 5.4 3.2Z" fill="#8a9a58"/><path d="M21.6 19.6 H22.8 L22.6 24.8 H21.8Z M23.4 19.6 H24.6 L24.2 25.4 H23.4Z" fill="#f0e494"/><path d="M20.8 24.6 H22.8 V25.4 H20.8Z M22.4 25.4 H24.4 V26.2 H22.4Z" fill="#d8e8c0"/><path d="M20.8 8.4 L16.3 11 L16.6 12 L21 10.4Z" fill="#f0e494"/><path d="M25.4 7.6 L26.2 15 L25.4 15.2 L24.8 9Z" fill="#f0e494"/><path d="M21.2 5.4 L24.4 5.4 L25.8 6.6 L26 10.4 L25.2 10.6 L25.4 20 L20.6 19.6 L21 11.6 L20 8.6 L20.4 6.4Z" fill="#c6c04c"/><circle cx="22.6" cy="3.4" r="1.8" fill="#f0e494"/><path d="M20.8 3 C20.8 .8 25 .6 25 3.2 C25.6 3.6 25.6 4.8 24.6 5 C24.6 3.8 23.6 2.8 21.2 3.2Z" fill="#5a4a10"/></svg>
<div class="t" style="left:516.8000000000001px;top:298.79999999999995px;font-size:4.6px;color:#dedede;font-feature-settings:'palt'">イエローサ...</div>
<svg style="left:444.6px;top:312.4px" width="29" height="28.6" viewBox="0 0 29 28.5" preserveAspectRatio="none"><rect width="29" height="28.5" fill="#454545"/><g opacity=".8"><ellipse cx="6.2" cy="25.8" rx="4" ry="1.5" fill="#e8e0ee"/><path d="M8.5 25.4 L16.6 21.2 L17.6 22.2 L10 26.6Z" fill="#e8e0ee" opacity=".8"/><ellipse cx="22.8" cy="25.8" rx="3.6" ry="1.4" fill="#e8e0ee"/></g><path d="M4.6 14.6 H8.9 L8.8 24.6 H7.2 L6.8 17.6 L6.3 23.9 H4.8Z" fill="#b8a2d2"/><path d="M4.4 23.8 H6.4 V25 H3.6Z M7 24.6 H8.9 V25.8 H6.3Z" fill="#e8d0e8"/><path d="M5.4 5.2 L8.2 5.2 L10.4 6.4 L11 11.6 L9.6 15.2 L4.4 15 L3.8 11 L4.2 6.6Z" fill="#eec6e2"/><path d="M6 5.2 L7.8 5.2 L6.8 8.6Z" fill="#f8e8f4"/><circle cx="6.9" cy="3.4" r="1.8" fill="#f4d0e6"/><path d="M4.9 3.2 C4.8 1 9 .6 9.2 3 C9.2 4 8.8 4.6 8.6 5 C8.6 3.6 7.6 2.8 5.4 3.2Z" fill="#e8b4d4"/><path d="M21.6 19.6 H22.8 L22.6 24.8 H21.8Z M23.4 19.6 H24.6 L24.2 25.4 H23.4Z" fill="#f4d0e6"/><path d="M20.8 24.6 H22.8 V25.4 H20.8Z M22.4 25.4 H24.4 V26.2 H22.4Z" fill="#e8d0e8"/><path d="M20.8 8.4 L16.3 11 L16.6 12 L21 10.4Z" fill="#f4d0e6"/><path d="M25.4 7.6 L26.2 15 L25.4 15.2 L24.8 9Z" fill="#f4d0e6"/><path d="M21.2 5.4 L24.4 5.4 L25.8 6.6 L26 10.4 L25.2 10.6 L25.4 20 L20.6 19.6 L21 11.6 L20 8.6 L20.4 6.4Z" fill="#d4acdc"/><circle cx="22.6" cy="3.4" r="1.8" fill="#f4d0e6"/><path d="M20.8 3 C20.8 .8 25 .6 25 3.2 C25.6 3.6 25.6 4.8 24.6 5 C24.6 3.8 23.6 2.8 21.2 3.2Z" fill="#e0a8cc"/></svg>
<div class="a" style="left:452.6px;top:343.4px;width:4px;height:0.6px;background:#9a9a9a;"></div>
<svg style="left:480.2px;top:312.4px" width="29" height="28.6" viewBox="0 0 29 28.5" preserveAspectRatio="none"><rect width="29" height="28.5" fill="#454545"/><g opacity=".8"><ellipse cx="6.2" cy="25.8" rx="4" ry="1.5" fill="#a8dcd4"/><path d="M8.5 25.4 L16.6 21.2 L17.6 22.2 L10 26.6Z" fill="#a8dcd4" opacity=".8"/><ellipse cx="22.8" cy="25.8" rx="3.6" ry="1.4" fill="#a8dcd4"/></g><path d="M4.6 14.6 H8.9 L8.8 24.6 H7.2 L6.8 17.6 L6.3 23.9 H4.8Z" fill="#386a50"/><path d="M4.4 23.8 H6.4 V25 H3.6Z M7 24.6 H8.9 V25.8 H6.3Z" fill="#203828"/><path d="M5.4 5.2 L8.2 5.2 L10.4 6.4 L11 11.6 L9.6 15.2 L4.4 15 L3.8 11 L4.2 6.6Z" fill="#8caa8a"/><path d="M6 5.2 L7.8 5.2 L6.8 8.6Z" fill="#d0e0d0"/><circle cx="6.9" cy="3.4" r="1.8" fill="#c8d8ba"/><path d="M4.9 3.2 C4.8 1 9 .6 9.2 3 C9.2 4 8.8 4.6 8.6 5 C8.6 3.6 7.6 2.8 5.4 3.2Z" fill="#4a5a3c"/><path d="M21.6 19.6 H22.8 L22.6 24.8 H21.8Z M23.4 19.6 H24.6 L24.2 25.4 H23.4Z" fill="#c8d8ba"/><path d="M20.8 24.6 H22.8 V25.4 H20.8Z M22.4 25.4 H24.4 V26.2 H22.4Z" fill="#203828"/><path d="M20.8 8.4 L16.3 11 L16.6 12 L21 10.4Z" fill="#c8d8ba"/><path d="M25.4 7.6 L26.2 15 L25.4 15.2 L24.8 9Z" fill="#c8d8ba"/><path d="M21.2 5.4 L24.4 5.4 L25.8 6.6 L26 10.4 L25.2 10.6 L25.4 20 L20.6 19.6 L21 11.6 L20 8.6 L20.4 6.4Z" fill="#3c7c5c"/><circle cx="22.6" cy="3.4" r="1.8" fill="#c8d8ba"/><path d="M20.8 3 C20.8 .8 25 .6 25 3.2 C25.6 3.6 25.6 4.8 24.6 5 C24.6 3.8 23.6 2.8 21.2 3.2Z" fill="#141e14"/></svg>
<div class="a" style="left:490.2px;top:343.4px;width:5px;height:0.6px;background:#9a9a9a;"></div>
<svg style="left:515.6px;top:312.4px" width="29" height="28.6" viewBox="0 0 29 28.5" preserveAspectRatio="none"><rect width="29" height="28.5" fill="#454545"/><g opacity=".8"><ellipse cx="6.2" cy="25.8" rx="4" ry="1.5" fill="#b8dcd8"/><path d="M8.5 25.4 L16.6 21.2 L17.6 22.2 L10 26.6Z" fill="#b8dcd8" opacity=".8"/><ellipse cx="22.8" cy="25.8" rx="3.6" ry="1.4" fill="#b8dcd8"/></g><path d="M4.6 14.6 H8.9 L8.8 24.6 H7.2 L6.8 17.6 L6.3 23.9 H4.8Z" fill="#6c6c6c"/><path d="M4.4 23.8 H6.4 V25 H3.6Z M7 24.6 H8.9 V25.8 H6.3Z" fill="#3a2a22"/><path d="M5.4 5.2 L8.2 5.2 L10.4 6.4 L11 11.6 L9.6 15.2 L4.4 15 L3.8 11 L4.2 6.6Z" fill="#c8aa8c"/><path d="M6 5.2 L7.8 5.2 L6.8 8.6Z" fill="#d8d8d8"/><circle cx="6.9" cy="3.4" r="1.8" fill="#c88c62"/><path d="M4.9 3.2 C4.8 1 9 .6 9.2 3 C9.2 4 8.8 4.6 8.6 5 C8.6 3.6 7.6 2.8 5.4 3.2Z" fill="#c45a2c"/><path d="M21.6 19.6 H22.8 L22.6 24.8 H21.8Z M23.4 19.6 H24.6 L24.2 25.4 H23.4Z" fill="#c88c62"/><path d="M20.8 24.6 H22.8 V25.4 H20.8Z M22.4 25.4 H24.4 V26.2 H22.4Z" fill="#3a2a22"/><path d="M20.8 8.4 L16.3 11 L16.6 12 L21 10.4Z" fill="#c88c62"/><path d="M25.4 7.6 L26.2 15 L25.4 15.2 L24.8 9Z" fill="#c88c62"/><path d="M21.2 5.4 L24.4 5.4 L25.8 6.6 L26 10.4 L25.2 10.6 L25.4 20 L20.6 19.6 L21 11.6 L20 8.6 L20.4 6.4Z" fill="#6a7276"/><circle cx="22.6" cy="3.4" r="1.8" fill="#c88c62"/><path d="M20.8 3 C20.8 .8 25 .6 25 3.2 C25.6 3.6 25.6 4.8 24.6 5 C24.6 3.8 23.6 2.8 21.2 3.2Z" fill="#2a1a10"/></svg>
<div class="a" style="left:527.6px;top:343.4px;width:6px;height:0.6px;background:#9a9a9a;"></div>
<div class="a" style="left:440.6px;top:344.2px;width:116.6px;height:4px;background:#535353;"></div>
<div class="a" style="left:444px;top:350px;width:110px;height:24.4px;background:#535353;border:.5px solid #5e5e5e;border-radius:.8px"></div>
<svg style="left:448px;top:353.2px" width="6" height="6" viewBox="0 0 6 6"><circle cx="3" cy="3" r="2.5" fill="none" stroke="#cfcfcf" stroke-width=".6"/><path d="M1.8 2.2 C2.4 1.6 3.6 1.6 4.2 2.2 M1.8 3.6 C2.4 4.6 3.6 4.6 4.2 3.6" fill="none" stroke="#cfcfcf" stroke-width=".5"/></svg>
<div class="t" style="left:458.4px;top:353.2px;font-size:4.6px;color:#d8d8d8;font-feature-settings:'palt';letter-spacing:.22px">生成 AI モデルのトレーニングにコンテ</div>
<div class="t" style="left:458.4px;top:360px;font-size:4.6px;color:#d8d8d8;font-feature-settings:'palt';letter-spacing:.2px">ンツが使用されることはありません。</div>
<div class="t" style="left:458.4px;top:367.2px;font-size:3.6px;color:#e0e0e0;font-weight:bold;border-bottom:.4px solid #ccc">詳細</div>
<div class="t" style="left:545.6px;top:353.4px;font-size:4.4px;color:#b8b8b8;">×</div>
<svg style="left:445.2px;top:378.8px" width="5.6" height="5.6" viewBox="0 0 5.6 5.6"><circle cx="2.8" cy="2.8" r="2.4" fill="none" stroke="#cfcfcf" stroke-width=".55"/><path d="M2.8 2.4 V4.2 M2.8 1.3 V1.9" stroke="#cfcfcf" stroke-width=".6"/></svg>
<svg style="left:496px;top:379px" width="6" height="5" viewBox="0 0 6 5"><path d="M.3 .6 H2.2 L2.8 1.4 H5.6 V4.6 H.3Z" fill="#d4d4d4"/></svg>
<div class="a" style="left:507.4px;top:377.6px;width:46.2px;height:7.6px;background:#535353;border:.5px solid #707070;border-radius:.8px"></div>
<div class="t" style="left:511.4px;top:379.2px;font-size:4.6px;color:#e4e4e4;font-weight:bold;font-feature-settings:'palt';letter-spacing:.25px">詳細オプション...</div>
<!--STATUS-->
<div class="a" style="left:72px;top:439.1px;width:572.5px;height:15.6px;background:#505050;overflow:hidden">
<div class="a" style="left:0;top:0;width:579px;height:.6px;background:#3e3e3e"></div>
<div class="a" style="left:2px;top:2.5px;width:5.2px;height:5.2px;border-radius:50%;background:#d2d2d2"></div>
<div class="t" style="left:3.6px;top:3.1px;font-size:4.2px;color:#444;font-weight:bold">?</div>
<div class="t" style="left:12px;top:3.2px;font-size:4.2px;color:#c4c4c4;letter-spacing:.02px">ツールの使用方法を確認するには、「疑問符」アイコンを選択してください。</div>
<div class="a" style="left:1.6px;top:11.1px;width:18.8px;height:6px;background:#434343"></div>
<div class="t" style="left:2.4px;top:13.5px;font-size:4.6px;color:#d8d8d8">554.93%</div>
<div class="t" style="left:22.6px;top:14.1px;font-size:3.4px;color:#bbb">⌄</div>
<div class="a" style="left:29.8px;top:11.1px;width:18.8px;height:6px;background:#434343"></div>
<div class="t" style="left:31px;top:13.5px;font-size:4.6px;color:#d8d8d8">0°</div>
<div class="t" style="left:51px;top:14.1px;font-size:3.4px;color:#bbb">⌄</div>
<div class="t" style="left:59px;top:13.7px;font-size:4px;color:#777">|◂</div>
<div class="t" style="left:65.6px;top:13.7px;font-size:4px;color:#777">◂</div>
<div class="a" style="left:71.6px;top:11.1px;width:15px;height:6px;background:#434343"></div>
<div class="t" style="left:74px;top:13.5px;font-size:4.6px;color:#d8d8d8">1</div>
<div class="t" style="left:89.4px;top:14.1px;font-size:3.4px;color:#bbb">⌄</div>
<div class="t" style="left:97px;top:13.7px;font-size:4px;color:#777">▸</div>
<div class="t" style="left:103px;top:13.7px;font-size:4px;color:#777">▸|</div>
<div class="t" style="left:119px;top:13.7px;font-size:4.4px;color:#c8c8c8">ダイレクト選択ツールを切り替え</div>
<div class="t" style="left:189px;top:13.7px;font-size:4px;color:#ddd">▸</div>
<div class="t" style="left:195px;top:13.7px;font-size:4px;color:#888">◂</div>
<div class="a" style="left:381px;top:11.5px;width:8px;height:5px;border-radius:2px;background:#626262"></div>
<div class="t" style="left:568.4px;top:11.5px;font-size:4px;color:#999">›</div>
</div>
<!--RED-->
<svg style="left:0;top:0" width="800" height="500" viewBox="0 0 800 500"><path fill="#fa1c24" fill-rule="evenodd" d="M427.1 161.3 H514 V190.3 H427.1Z M436.9 171.5 H504 V180.6 H436.9Z M517.3 186.5 H569.8 V219.7 H517.3Z M527.3 196.7 H559.7 V209.9 H527.3Z"/></svg>
<!--END-->
</div>
</body>
</html>
